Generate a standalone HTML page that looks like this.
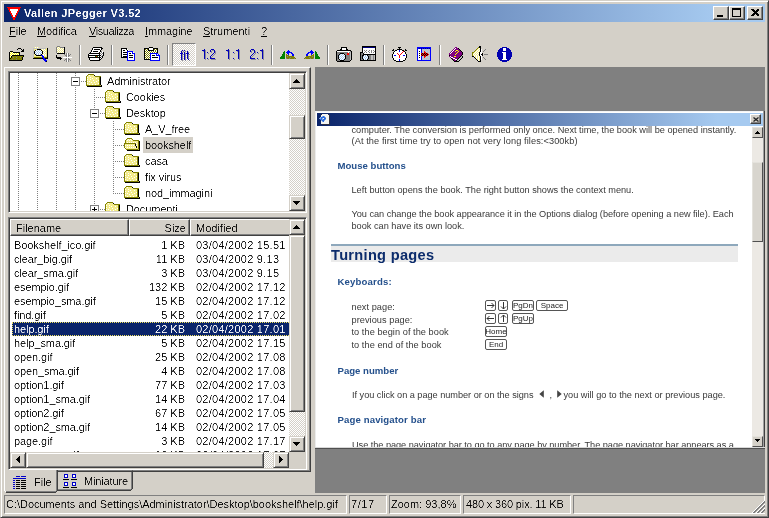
<!DOCTYPE html><html><head><meta charset="utf-8"><style>
html,body{margin:0;padding:0;}
body{will-change:transform;width:769px;height:518px;overflow:hidden;position:relative;background:#d4d0c8;font-family:"Liberation Sans",sans-serif;font-size:11px;color:#000;}
.a{position:absolute;box-sizing:border-box;}
.t{position:absolute;white-space:nowrap;line-height:13px;filter:url(#crisp);}
.d{filter:none;}
u{text-decoration-thickness:1px;text-underline-offset:1px;}
svg{position:absolute;shape-rendering:crispEdges;}
.dith{background-image:linear-gradient(45deg,#fff 25%,transparent 25%,transparent 75%,#fff 75%),linear-gradient(45deg,#fff 25%,transparent 25%,transparent 75%,#fff 75%);background-size:2px 2px;background-position:0 0,1px 1px;background-color:#d4d0c8;}
</style></head><body>
<svg width="0" height="0" style="position:absolute;left:0;top:0"><filter id="crisp" x="-5%" y="-20%" width="110%" height="140%"><feComponentTransfer><feFuncA type="table" tableValues="0 0 0.8 1"/></feComponentTransfer></filter></svg>

<div class="a" style="left:0px;top:0px;width:769px;height:518px;border-top:1px solid #d4d0c8;border-left:1px solid #d4d0c8;border-right:1px solid #404040;border-bottom:1px solid #404040;box-shadow:inset 1px 1px #ffffff,inset -1px -1px #808080;"></div>
<div class="a" style="left:4px;top:4px;width:761px;height:18px;background:linear-gradient(to right,#0a246a 0px,#a6caf0 716px);"></div>
<div class="t" style="left:24px;top:7px;color:#fff;font-weight:bold;letter-spacing:0.35px;">Vallen JPegger V3.52</div>
<div class="a" style="left:713px;top:6px;width:16px;height:14px;background:#d4d0c8;border:1px solid;border-color:#ffffff #404040 #404040 #ffffff;box-shadow:inset -1px -1px #808080;"><div class="a" style="left:3px;top:8px;width:6px;height:2px;background:#000"></div></div>
<div class="a" style="left:729px;top:6px;width:16px;height:14px;background:#d4d0c8;border:1px solid;border-color:#ffffff #404040 #404040 #ffffff;box-shadow:inset -1px -1px #808080;"><div class="a" style="left:2px;top:1px;width:9px;height:9px;border:1px solid #000;border-top-width:2px"></div></div>
<div class="a" style="left:747px;top:6px;width:16px;height:14px;background:#d4d0c8;border:1px solid;border-color:#ffffff #404040 #404040 #ffffff;box-shadow:inset -1px -1px #808080;"><svg style="left:3px;top:2px" width="8" height="7" viewBox="0 0 8 7"><path d="M0 0h2l2 2 2-2h2v1l-2.5 2.5L8 6v1H6L4 5 2 7H0V6l2.5-2.5L0 1z" fill="#000"/></svg></div>
<div class="t" style="left:9px;top:25px;letter-spacing:0px;"><u>F</u>ile</div>
<div class="t" style="left:37px;top:25px;letter-spacing:-0.14px;"><u>M</u>odifica</div>
<div class="t" style="left:89px;top:25px;letter-spacing:-0.44px;"><u>V</u>isualizza</div>
<div class="t" style="left:145px;top:25px;letter-spacing:-0.14px;"><u>I</u>mmagine</div>
<div class="t" style="left:203px;top:25px;letter-spacing:0px;"><u>S</u>trumenti</div>
<div class="t" style="left:261px;top:25px;letter-spacing:0px;"><u>?</u></div>
<div class="a" style="left:79px;top:45px;width:1px;height:20px;background:#808080;"></div>
<div class="a" style="left:80px;top:45px;width:1px;height:20px;background:#ffffff;"></div>
<div class="a" style="left:111px;top:45px;width:1px;height:20px;background:#808080;"></div>
<div class="a" style="left:112px;top:45px;width:1px;height:20px;background:#ffffff;"></div>
<div class="a" style="left:167px;top:45px;width:1px;height:20px;background:#808080;"></div>
<div class="a" style="left:168px;top:45px;width:1px;height:20px;background:#ffffff;"></div>
<div class="a" style="left:271px;top:45px;width:1px;height:20px;background:#808080;"></div>
<div class="a" style="left:272px;top:45px;width:1px;height:20px;background:#ffffff;"></div>
<div class="a" style="left:327px;top:45px;width:1px;height:20px;background:#808080;"></div>
<div class="a" style="left:328px;top:45px;width:1px;height:20px;background:#ffffff;"></div>
<div class="a" style="left:383px;top:45px;width:1px;height:20px;background:#808080;"></div>
<div class="a" style="left:384px;top:45px;width:1px;height:20px;background:#ffffff;"></div>
<div class="a" style="left:439px;top:45px;width:1px;height:20px;background:#808080;"></div>
<div class="a" style="left:440px;top:45px;width:1px;height:20px;background:#ffffff;"></div>
<div class="a dith" style="left:172px;top:43px;width:24px;height:23px;border:1px solid;border-color:#808080 #ffffff #ffffff #808080;"></div>
<svg style="left:8px;top:46px" width="16" height="15" viewBox="0 0 16 15"><rect x="10" y="2" width="3" height="1" fill="#000000"/><rect x="9" y="3" width="1" height="1" fill="#000000"/><rect x="13" y="3" width="1" height="1" fill="#000000"/><rect x="15" y="3" width="1" height="1" fill="#000000"/><rect x="14" y="4" width="2" height="1" fill="#000000"/><rect x="2" y="5" width="3" height="1" fill="#000000"/><rect x="13" y="5" width="3" height="1" fill="#000000"/><rect x="1" y="6" width="1" height="1" fill="#000000"/><rect x="2" y="6" width="1" height="1" fill="#ffffff"/><rect x="3" y="6" width="1" height="1" fill="#ffff00"/><rect x="4" y="6" width="1" height="1" fill="#ffffff"/><rect x="5" y="6" width="7" height="1" fill="#000000"/><rect x="1" y="7" width="1" height="1" fill="#000000"/><rect x="2" y="7" width="1" height="1" fill="#ffff00"/><rect x="3" y="7" width="1" height="1" fill="#ffffff"/><rect x="4" y="7" width="1" height="1" fill="#ffff00"/><rect x="5" y="7" width="1" height="1" fill="#ffffff"/><rect x="6" y="7" width="1" height="1" fill="#ffff00"/><rect x="7" y="7" width="1" height="1" fill="#ffffff"/><rect x="8" y="7" width="1" height="1" fill="#ffff00"/><rect x="9" y="7" width="1" height="1" fill="#ffffff"/><rect x="10" y="7" width="1" height="1" fill="#ffff00"/><rect x="11" y="7" width="1" height="1" fill="#000000"/><rect x="1" y="8" width="1" height="1" fill="#000000"/><rect x="2" y="8" width="1" height="1" fill="#ffffff"/><rect x="3" y="8" width="1" height="1" fill="#ffff00"/><rect x="4" y="8" width="1" height="1" fill="#ffffff"/><rect x="5" y="8" width="1" height="1" fill="#ffff00"/><rect x="6" y="8" width="1" height="1" fill="#ffffff"/><rect x="7" y="8" width="1" height="1" fill="#ffff00"/><rect x="8" y="8" width="1" height="1" fill="#ffffff"/><rect x="9" y="8" width="1" height="1" fill="#ffff00"/><rect x="10" y="8" width="1" height="1" fill="#ffffff"/><rect x="11" y="8" width="1" height="1" fill="#000000"/><rect x="1" y="9" width="1" height="1" fill="#000000"/><rect x="2" y="9" width="1" height="1" fill="#ffff00"/><rect x="3" y="9" width="1" height="1" fill="#ffffff"/><rect x="4" y="9" width="12" height="1" fill="#000000"/><rect x="1" y="10" width="1" height="1" fill="#000000"/><rect x="2" y="10" width="1" height="1" fill="#ffffff"/><rect x="3" y="10" width="1" height="1" fill="#000000"/><rect x="4" y="10" width="11" height="1" fill="#808000"/><rect x="15" y="10" width="1" height="1" fill="#000000"/><rect x="1" y="11" width="1" height="1" fill="#000000"/><rect x="2" y="11" width="1" height="1" fill="#ffff00"/><rect x="3" y="11" width="1" height="1" fill="#000000"/><rect x="4" y="11" width="1" height="1" fill="#808000"/><rect x="5" y="11" width="1" height="1" fill="#808080"/><rect x="6" y="11" width="2" height="1" fill="#808000"/><rect x="8" y="11" width="1" height="1" fill="#808080"/><rect x="9" y="11" width="3" height="1" fill="#808000"/><rect x="12" y="11" width="1" height="1" fill="#808080"/><rect x="13" y="11" width="1" height="1" fill="#808000"/><rect x="14" y="11" width="1" height="1" fill="#000000"/><rect x="1" y="12" width="2" height="1" fill="#000000"/><rect x="3" y="12" width="11" height="1" fill="#808000"/><rect x="14" y="12" width="1" height="1" fill="#000000"/><rect x="1" y="13" width="1" height="1" fill="#000000"/><rect x="2" y="13" width="2" height="1" fill="#808000"/><rect x="4" y="13" width="1" height="1" fill="#808080"/><rect x="5" y="13" width="3" height="1" fill="#808000"/><rect x="8" y="13" width="1" height="1" fill="#808080"/><rect x="9" y="13" width="5" height="1" fill="#808000"/><rect x="14" y="13" width="1" height="1" fill="#000000"/><rect x="1" y="14" width="13" height="1" fill="#000000"/></svg>
<svg style="left:32px;top:46px" width="16" height="16" viewBox="0 0 16 16"><rect x="2" y="1" width="1" height="1" fill="#f4ec8c"/><rect x="3" y="1" width="1" height="1" fill="#ffffff"/><rect x="4" y="1" width="1" height="1" fill="#f4ec8c"/><rect x="5" y="1" width="1" height="1" fill="#ffffff"/><rect x="6" y="1" width="1" height="1" fill="#f4ec8c"/><rect x="1" y="2" width="13" height="1" fill="#c0c0c0"/><rect x="14" y="2" width="1" height="1" fill="#f4ec8c"/><rect x="15" y="2" width="1" height="1" fill="#000000"/><rect x="1" y="3" width="1" height="1" fill="#c0c0c0"/><rect x="2" y="3" width="3" height="1" fill="#f4ec8c"/><rect x="5" y="3" width="4" height="1" fill="#000000"/><rect x="9" y="3" width="1" height="1" fill="#f4ec8c"/><rect x="10" y="3" width="1" height="1" fill="#ffffff"/><rect x="11" y="3" width="1" height="1" fill="#f4ec8c"/><rect x="12" y="3" width="1" height="1" fill="#ffffff"/><rect x="13" y="3" width="2" height="1" fill="#f4ec8c"/><rect x="15" y="3" width="1" height="1" fill="#000000"/><rect x="1" y="4" width="1" height="1" fill="#c0c0c0"/><rect x="2" y="4" width="1" height="1" fill="#f4ec8c"/><rect x="3" y="4" width="1" height="1" fill="#000000"/><rect x="4" y="4" width="1" height="1" fill="#ffffff"/><rect x="5" y="4" width="1" height="1" fill="#a6caf0"/><rect x="6" y="4" width="1" height="1" fill="#ffffff"/><rect x="7" y="4" width="1" height="1" fill="#a6caf0"/><rect x="8" y="4" width="1" height="1" fill="#ffffff"/><rect x="9" y="4" width="1" height="1" fill="#000000"/><rect x="10" y="4" width="1" height="1" fill="#f4ec8c"/><rect x="11" y="4" width="1" height="1" fill="#ffffff"/><rect x="12" y="4" width="1" height="1" fill="#f4ec8c"/><rect x="13" y="4" width="1" height="1" fill="#ffffff"/><rect x="14" y="4" width="1" height="1" fill="#f4ec8c"/><rect x="15" y="4" width="1" height="1" fill="#000000"/><rect x="1" y="5" width="1" height="1" fill="#c0c0c0"/><rect x="2" y="5" width="1" height="1" fill="#000000"/><rect x="3" y="5" width="1" height="1" fill="#ffffff"/><rect x="4" y="5" width="1" height="1" fill="#a6caf0"/><rect x="5" y="5" width="1" height="1" fill="#ffffff"/><rect x="6" y="5" width="1" height="1" fill="#a6caf0"/><rect x="7" y="5" width="1" height="1" fill="#ffffff"/><rect x="8" y="5" width="1" height="1" fill="#a6caf0"/><rect x="9" y="5" width="1" height="1" fill="#ffffff"/><rect x="10" y="5" width="1" height="1" fill="#000000"/><rect x="11" y="5" width="1" height="1" fill="#f4ec8c"/><rect x="12" y="5" width="1" height="1" fill="#ffffff"/><rect x="13" y="5" width="2" height="1" fill="#f4ec8c"/><rect x="15" y="5" width="1" height="1" fill="#000000"/><rect x="1" y="6" width="1" height="1" fill="#c0c0c0"/><rect x="2" y="6" width="1" height="1" fill="#000000"/><rect x="3" y="6" width="1" height="1" fill="#a6caf0"/><rect x="4" y="6" width="1" height="1" fill="#ffffff"/><rect x="5" y="6" width="1" height="1" fill="#a6caf0"/><rect x="6" y="6" width="1" height="1" fill="#ffffff"/><rect x="7" y="6" width="1" height="1" fill="#a6caf0"/><rect x="8" y="6" width="1" height="1" fill="#ffffff"/><rect x="9" y="6" width="1" height="1" fill="#a6caf0"/><rect x="10" y="6" width="1" height="1" fill="#000000"/><rect x="11" y="6" width="1" height="1" fill="#ffffff"/><rect x="12" y="6" width="1" height="1" fill="#f4ec8c"/><rect x="13" y="6" width="1" height="1" fill="#ffffff"/><rect x="14" y="6" width="1" height="1" fill="#f4ec8c"/><rect x="15" y="6" width="1" height="1" fill="#000000"/><rect x="1" y="7" width="1" height="1" fill="#c0c0c0"/><rect x="2" y="7" width="1" height="1" fill="#000000"/><rect x="3" y="7" width="1" height="1" fill="#ffffff"/><rect x="4" y="7" width="1" height="1" fill="#a6caf0"/><rect x="5" y="7" width="1" height="1" fill="#ffffff"/><rect x="6" y="7" width="1" height="1" fill="#a6caf0"/><rect x="7" y="7" width="1" height="1" fill="#ffffff"/><rect x="8" y="7" width="1" height="1" fill="#a6caf0"/><rect x="9" y="7" width="1" height="1" fill="#ffffff"/><rect x="10" y="7" width="1" height="1" fill="#000000"/><rect x="11" y="7" width="1" height="1" fill="#f4ec8c"/><rect x="12" y="7" width="1" height="1" fill="#ffffff"/><rect x="13" y="7" width="2" height="1" fill="#f4ec8c"/><rect x="15" y="7" width="1" height="1" fill="#000000"/><rect x="1" y="8" width="1" height="1" fill="#c0c0c0"/><rect x="2" y="8" width="1" height="1" fill="#f4ec8c"/><rect x="3" y="8" width="1" height="1" fill="#000000"/><rect x="4" y="8" width="1" height="1" fill="#a6caf0"/><rect x="5" y="8" width="1" height="1" fill="#ffffff"/><rect x="6" y="8" width="1" height="1" fill="#a6caf0"/><rect x="7" y="8" width="1" height="1" fill="#ffffff"/><rect x="8" y="8" width="1" height="1" fill="#a6caf0"/><rect x="9" y="8" width="1" height="1" fill="#000000"/><rect x="10" y="8" width="1" height="1" fill="#f4ec8c"/><rect x="11" y="8" width="1" height="1" fill="#ffffff"/><rect x="12" y="8" width="1" height="1" fill="#f4ec8c"/><rect x="13" y="8" width="1" height="1" fill="#ffffff"/><rect x="14" y="8" width="1" height="1" fill="#f4ec8c"/><rect x="15" y="8" width="1" height="1" fill="#000000"/><rect x="1" y="9" width="1" height="1" fill="#c0c0c0"/><rect x="2" y="9" width="2" height="1" fill="#f4ec8c"/><rect x="4" y="9" width="5" height="1" fill="#000000"/><rect x="9" y="9" width="2" height="1" fill="#0000ff"/><rect x="11" y="9" width="1" height="1" fill="#ffffff"/><rect x="12" y="9" width="1" height="1" fill="#f4ec8c"/><rect x="13" y="9" width="1" height="1" fill="#ffffff"/><rect x="14" y="9" width="1" height="1" fill="#f4ec8c"/><rect x="15" y="9" width="1" height="1" fill="#000000"/><rect x="1" y="10" width="1" height="1" fill="#c0c0c0"/><rect x="2" y="10" width="8" height="1" fill="#f4ec8c"/><rect x="10" y="10" width="2" height="1" fill="#0000ff"/><rect x="12" y="10" width="3" height="1" fill="#f4ec8c"/><rect x="15" y="10" width="1" height="1" fill="#000000"/><rect x="1" y="11" width="1" height="1" fill="#c0c0c0"/><rect x="2" y="11" width="8" height="1" fill="#808000"/><rect x="10" y="11" width="2" height="1" fill="#0000ff"/><rect x="12" y="11" width="3" height="1" fill="#808000"/><rect x="15" y="11" width="1" height="1" fill="#000000"/><rect x="1" y="12" width="10" height="1" fill="#000000"/><rect x="11" y="12" width="2" height="1" fill="#0000ff"/><rect x="13" y="12" width="3" height="1" fill="#000000"/><rect x="11" y="13" width="3" height="1" fill="#0000ff"/><rect x="12" y="14" width="3" height="1" fill="#0000ff"/><rect x="13" y="15" width="1" height="1" fill="#0000ff"/><rect x="14" y="15" width="1" height="1" fill="#000000"/></svg>
<svg style="left:56px;top:46px" width="16" height="16" viewBox="0 0 16 16"><rect x="1" y="0" width="3" height="1" fill="#808080"/><rect x="0" y="1" width="1" height="1" fill="#808080"/><rect x="1" y="1" width="1" height="1" fill="#f4ec8c"/><rect x="2" y="1" width="1" height="1" fill="#ffffff"/><rect x="3" y="1" width="1" height="1" fill="#f4ec8c"/><rect x="4" y="1" width="4" height="1" fill="#808080"/><rect x="8" y="1" width="1" height="1" fill="#000000"/><rect x="0" y="2" width="1" height="1" fill="#808080"/><rect x="1" y="2" width="1" height="1" fill="#ffffff"/><rect x="2" y="2" width="1" height="1" fill="#f4ec8c"/><rect x="3" y="2" width="1" height="1" fill="#ffffff"/><rect x="4" y="2" width="1" height="1" fill="#f4ec8c"/><rect x="5" y="2" width="1" height="1" fill="#ffffff"/><rect x="6" y="2" width="1" height="1" fill="#f4ec8c"/><rect x="7" y="2" width="1" height="1" fill="#ffffff"/><rect x="8" y="2" width="1" height="1" fill="#000000"/><rect x="0" y="3" width="1" height="1" fill="#808080"/><rect x="1" y="3" width="1" height="1" fill="#f4ec8c"/><rect x="2" y="3" width="1" height="1" fill="#ffffff"/><rect x="3" y="3" width="1" height="1" fill="#f4ec8c"/><rect x="4" y="3" width="1" height="1" fill="#ffffff"/><rect x="5" y="3" width="1" height="1" fill="#f4ec8c"/><rect x="6" y="3" width="1" height="1" fill="#ffffff"/><rect x="7" y="3" width="1" height="1" fill="#f4ec8c"/><rect x="8" y="3" width="1" height="1" fill="#000000"/><rect x="0" y="4" width="1" height="1" fill="#808080"/><rect x="1" y="4" width="1" height="1" fill="#ffffff"/><rect x="2" y="4" width="1" height="1" fill="#f4ec8c"/><rect x="3" y="4" width="1" height="1" fill="#ffffff"/><rect x="4" y="4" width="1" height="1" fill="#f4ec8c"/><rect x="5" y="4" width="1" height="1" fill="#ffffff"/><rect x="6" y="4" width="1" height="1" fill="#f4ec8c"/><rect x="7" y="4" width="1" height="1" fill="#ffffff"/><rect x="8" y="4" width="1" height="1" fill="#000000"/><rect x="0" y="5" width="1" height="1" fill="#808080"/><rect x="1" y="5" width="1" height="1" fill="#f4ec8c"/><rect x="2" y="5" width="1" height="1" fill="#ffffff"/><rect x="3" y="5" width="1" height="1" fill="#f4ec8c"/><rect x="4" y="5" width="1" height="1" fill="#ffffff"/><rect x="5" y="5" width="1" height="1" fill="#f4ec8c"/><rect x="6" y="5" width="1" height="1" fill="#ffffff"/><rect x="7" y="5" width="1" height="1" fill="#f4ec8c"/><rect x="8" y="5" width="1" height="1" fill="#000000"/><rect x="0" y="6" width="1" height="1" fill="#808080"/><rect x="1" y="6" width="1" height="1" fill="#ffffff"/><rect x="2" y="6" width="1" height="1" fill="#f4ec8c"/><rect x="3" y="6" width="1" height="1" fill="#ffffff"/><rect x="4" y="6" width="1" height="1" fill="#f4ec8c"/><rect x="5" y="6" width="1" height="1" fill="#ffffff"/><rect x="6" y="6" width="1" height="1" fill="#f4ec8c"/><rect x="7" y="6" width="1" height="1" fill="#ffffff"/><rect x="8" y="6" width="1" height="1" fill="#000000"/><rect x="1" y="7" width="8" height="1" fill="#000000"/><rect x="10" y="7" width="1" height="1" fill="#808080"/><rect x="11" y="7" width="1" height="1" fill="#ffffff"/><rect x="12" y="7" width="1" height="1" fill="#808080"/><rect x="8" y="8" width="1" height="1" fill="#808080"/><rect x="10" y="8" width="1" height="1" fill="#808080"/><rect x="11" y="8" width="1" height="1" fill="#ffffff"/><rect x="12" y="8" width="1" height="1" fill="#808080"/><rect x="14" y="8" width="1" height="1" fill="#808080"/><rect x="0" y="9" width="1" height="1" fill="#000000"/><rect x="9" y="9" width="2" height="1" fill="#808080"/><rect x="11" y="9" width="1" height="1" fill="#ffffff"/><rect x="12" y="9" width="2" height="1" fill="#808080"/><rect x="0" y="10" width="1" height="1" fill="#000000"/><rect x="10" y="10" width="1" height="1" fill="#808080"/><rect x="11" y="10" width="1" height="1" fill="#ffffff"/><rect x="12" y="10" width="1" height="1" fill="#808080"/><rect x="0" y="11" width="5" height="1" fill="#000000"/><rect x="7" y="11" width="9" height="1" fill="#ffffff"/><rect x="1" y="12" width="5" height="1" fill="#000000"/><rect x="10" y="12" width="1" height="1" fill="#808080"/><rect x="11" y="12" width="1" height="1" fill="#ffffff"/><rect x="12" y="12" width="1" height="1" fill="#808080"/><rect x="4" y="13" width="1" height="1" fill="#000000"/><rect x="9" y="13" width="2" height="1" fill="#808080"/><rect x="11" y="13" width="1" height="1" fill="#ffffff"/><rect x="12" y="13" width="2" height="1" fill="#808080"/><rect x="8" y="14" width="1" height="1" fill="#808080"/><rect x="10" y="14" width="1" height="1" fill="#808080"/><rect x="11" y="14" width="1" height="1" fill="#ffffff"/><rect x="12" y="14" width="1" height="1" fill="#808080"/><rect x="14" y="14" width="1" height="1" fill="#808080"/><rect x="10" y="15" width="1" height="1" fill="#808080"/><rect x="11" y="15" width="1" height="1" fill="#ffffff"/><rect x="12" y="15" width="1" height="1" fill="#808080"/></svg>
<svg style="left:88px;top:46px" width="16" height="15" viewBox="0 0 16 15"><rect x="5" y="1" width="9" height="1" fill="#000000"/><rect x="4" y="2" width="1" height="1" fill="#000000"/><rect x="5" y="2" width="8" height="1" fill="#ffffff"/><rect x="13" y="2" width="2" height="1" fill="#000000"/><rect x="4" y="3" width="1" height="1" fill="#000000"/><rect x="5" y="3" width="1" height="1" fill="#ffffff"/><rect x="6" y="3" width="6" height="1" fill="#000000"/><rect x="12" y="3" width="1" height="1" fill="#ffffff"/><rect x="13" y="3" width="1" height="1" fill="#000000"/><rect x="3" y="4" width="1" height="1" fill="#000000"/><rect x="4" y="4" width="8" height="1" fill="#ffffff"/><rect x="12" y="4" width="1" height="1" fill="#000000"/><rect x="3" y="5" width="1" height="1" fill="#000000"/><rect x="4" y="5" width="1" height="1" fill="#ffffff"/><rect x="5" y="5" width="5" height="1" fill="#000000"/><rect x="10" y="5" width="2" height="1" fill="#ffffff"/><rect x="12" y="5" width="1" height="1" fill="#000000"/><rect x="13" y="5" width="1" height="1" fill="#808080"/><rect x="14" y="5" width="1" height="1" fill="#ffffff"/><rect x="2" y="6" width="1" height="1" fill="#000000"/><rect x="3" y="6" width="8" height="1" fill="#ffffff"/><rect x="11" y="6" width="1" height="1" fill="#000000"/><rect x="12" y="6" width="1" height="1" fill="#ffffff"/><rect x="13" y="6" width="1" height="1" fill="#808080"/><rect x="14" y="6" width="1" height="1" fill="#ffffff"/><rect x="15" y="6" width="1" height="1" fill="#000000"/><rect x="1" y="7" width="11" height="1" fill="#000000"/><rect x="12" y="7" width="1" height="1" fill="#808080"/><rect x="13" y="7" width="1" height="1" fill="#ffffff"/><rect x="14" y="7" width="1" height="1" fill="#808080"/><rect x="15" y="7" width="1" height="1" fill="#000000"/><rect x="0" y="8" width="1" height="1" fill="#000000"/><rect x="1" y="8" width="10" height="1" fill="#ffffff"/><rect x="11" y="8" width="1" height="1" fill="#000000"/><rect x="12" y="8" width="1" height="1" fill="#ffffff"/><rect x="13" y="8" width="1" height="1" fill="#808080"/><rect x="14" y="8" width="1" height="1" fill="#ffffff"/><rect x="15" y="8" width="1" height="1" fill="#000000"/><rect x="0" y="9" width="13" height="1" fill="#000000"/><rect x="13" y="9" width="1" height="1" fill="#ffffff"/><rect x="14" y="9" width="1" height="1" fill="#808080"/><rect x="15" y="9" width="1" height="1" fill="#000000"/><rect x="0" y="10" width="1" height="1" fill="#000000"/><rect x="1" y="10" width="6" height="1" fill="#ffffff"/><rect x="7" y="10" width="1" height="1" fill="#008000"/><rect x="8" y="10" width="1" height="1" fill="#ff0000"/><rect x="9" y="10" width="1" height="1" fill="#008000"/><rect x="10" y="10" width="1" height="1" fill="#ffffff"/><rect x="11" y="10" width="1" height="1" fill="#000000"/><rect x="12" y="10" width="1" height="1" fill="#ffffff"/><rect x="13" y="10" width="1" height="1" fill="#808080"/><rect x="14" y="10" width="1" height="1" fill="#000000"/><rect x="0" y="11" width="13" height="1" fill="#000000"/><rect x="13" y="11" width="1" height="1" fill="#ffffff"/><rect x="14" y="11" width="1" height="1" fill="#000000"/><rect x="1" y="12" width="1" height="1" fill="#000000"/><rect x="2" y="12" width="9" height="1" fill="#ffffff"/><rect x="11" y="12" width="1" height="1" fill="#000000"/><rect x="12" y="12" width="1" height="1" fill="#ffffff"/><rect x="13" y="12" width="1" height="1" fill="#000000"/><rect x="1" y="13" width="1" height="1" fill="#000000"/><rect x="2" y="13" width="9" height="1" fill="#ffffff"/><rect x="11" y="13" width="2" height="1" fill="#000000"/><rect x="2" y="14" width="10" height="1" fill="#000000"/></svg>
<svg style="left:120px;top:47px" width="16" height="14" viewBox="0 0 16 14"><rect x="1" y="1" width="6" height="1" fill="#000000"/><rect x="1" y="2" width="1" height="1" fill="#000000"/><rect x="2" y="2" width="4" height="1" fill="#ffffff"/><rect x="6" y="2" width="1" height="1" fill="#000000"/><rect x="7" y="2" width="1" height="1" fill="#ffffff"/><rect x="1" y="3" width="1" height="1" fill="#000000"/><rect x="2" y="3" width="1" height="1" fill="#ffffff"/><rect x="3" y="3" width="2" height="1" fill="#000000"/><rect x="5" y="3" width="2" height="1" fill="#ffffff"/><rect x="7" y="3" width="1" height="1" fill="#000000"/><rect x="8" y="3" width="1" height="1" fill="#ffffff"/><rect x="1" y="4" width="1" height="1" fill="#000000"/><rect x="2" y="4" width="5" height="1" fill="#ffffff"/><rect x="7" y="4" width="6" height="1" fill="#0000ff"/><rect x="1" y="5" width="1" height="1" fill="#000000"/><rect x="2" y="5" width="1" height="1" fill="#ffffff"/><rect x="3" y="5" width="4" height="1" fill="#000000"/><rect x="7" y="5" width="1" height="1" fill="#0000ff"/><rect x="8" y="5" width="4" height="1" fill="#ffffff"/><rect x="12" y="5" width="1" height="1" fill="#0000ff"/><rect x="13" y="5" width="1" height="1" fill="#ffffff"/><rect x="1" y="6" width="1" height="1" fill="#000000"/><rect x="2" y="6" width="5" height="1" fill="#ffffff"/><rect x="7" y="6" width="1" height="1" fill="#0000ff"/><rect x="8" y="6" width="1" height="1" fill="#ffffff"/><rect x="9" y="6" width="2" height="1" fill="#000000"/><rect x="11" y="6" width="1" height="1" fill="#ffffff"/><rect x="12" y="6" width="3" height="1" fill="#0000ff"/><rect x="1" y="7" width="1" height="1" fill="#000000"/><rect x="2" y="7" width="1" height="1" fill="#ffffff"/><rect x="3" y="7" width="4" height="1" fill="#000000"/><rect x="7" y="7" width="1" height="1" fill="#0000ff"/><rect x="8" y="7" width="6" height="1" fill="#ffffff"/><rect x="14" y="7" width="1" height="1" fill="#0000ff"/><rect x="1" y="8" width="1" height="1" fill="#000000"/><rect x="2" y="8" width="5" height="1" fill="#ffffff"/><rect x="7" y="8" width="1" height="1" fill="#0000ff"/><rect x="8" y="8" width="1" height="1" fill="#ffffff"/><rect x="9" y="8" width="4" height="1" fill="#000000"/><rect x="13" y="8" width="1" height="1" fill="#ffffff"/><rect x="14" y="8" width="1" height="1" fill="#0000ff"/><rect x="1" y="9" width="1" height="1" fill="#000000"/><rect x="2" y="9" width="1" height="1" fill="#ffffff"/><rect x="3" y="9" width="4" height="1" fill="#000000"/><rect x="7" y="9" width="1" height="1" fill="#0000ff"/><rect x="8" y="9" width="6" height="1" fill="#ffffff"/><rect x="14" y="9" width="1" height="1" fill="#0000ff"/><rect x="1" y="10" width="6" height="1" fill="#000000"/><rect x="7" y="10" width="1" height="1" fill="#0000ff"/><rect x="8" y="10" width="1" height="1" fill="#ffffff"/><rect x="9" y="10" width="4" height="1" fill="#000000"/><rect x="13" y="10" width="1" height="1" fill="#ffffff"/><rect x="14" y="10" width="1" height="1" fill="#0000ff"/><rect x="7" y="11" width="1" height="1" fill="#0000ff"/><rect x="8" y="11" width="6" height="1" fill="#ffffff"/><rect x="14" y="11" width="1" height="1" fill="#0000ff"/><rect x="7" y="12" width="1" height="1" fill="#0000ff"/><rect x="8" y="12" width="6" height="1" fill="#ffffff"/><rect x="14" y="12" width="1" height="1" fill="#0000ff"/><rect x="7" y="13" width="8" height="1" fill="#0000ff"/></svg>
<svg style="left:144px;top:47px" width="16" height="14" viewBox="0 0 16 14"><rect x="5" y="0" width="4" height="1" fill="#000000"/><rect x="0" y="1" width="5" height="1" fill="#000000"/><rect x="5" y="1" width="4" height="1" fill="#ffffff"/><rect x="9" y="1" width="5" height="1" fill="#000000"/><rect x="0" y="2" width="1" height="1" fill="#000000"/><rect x="1" y="2" width="1" height="1" fill="#808000"/><rect x="2" y="2" width="1" height="1" fill="#ffffff"/><rect x="3" y="2" width="1" height="1" fill="#808000"/><rect x="4" y="2" width="1" height="1" fill="#000000"/><rect x="5" y="2" width="4" height="1" fill="#ffffff"/><rect x="9" y="2" width="1" height="1" fill="#000000"/><rect x="10" y="2" width="1" height="1" fill="#808000"/><rect x="11" y="2" width="1" height="1" fill="#ffffff"/><rect x="12" y="2" width="1" height="1" fill="#808000"/><rect x="13" y="2" width="1" height="1" fill="#000000"/><rect x="0" y="3" width="1" height="1" fill="#000000"/><rect x="1" y="3" width="1" height="1" fill="#ffffff"/><rect x="2" y="3" width="1" height="1" fill="#808000"/><rect x="3" y="3" width="1" height="1" fill="#ffffff"/><rect x="4" y="3" width="6" height="1" fill="#000000"/><rect x="10" y="3" width="1" height="1" fill="#ffffff"/><rect x="11" y="3" width="1" height="1" fill="#808000"/><rect x="12" y="3" width="1" height="1" fill="#ffffff"/><rect x="13" y="3" width="1" height="1" fill="#000000"/><rect x="0" y="4" width="1" height="1" fill="#000000"/><rect x="1" y="4" width="1" height="1" fill="#808000"/><rect x="2" y="4" width="1" height="1" fill="#ffffff"/><rect x="3" y="4" width="1" height="1" fill="#808000"/><rect x="4" y="4" width="1" height="1" fill="#ffffff"/><rect x="5" y="4" width="1" height="1" fill="#808000"/><rect x="6" y="4" width="1" height="1" fill="#ffffff"/><rect x="7" y="4" width="1" height="1" fill="#808000"/><rect x="8" y="4" width="1" height="1" fill="#ffffff"/><rect x="9" y="4" width="1" height="1" fill="#808000"/><rect x="10" y="4" width="1" height="1" fill="#ffffff"/><rect x="11" y="4" width="1" height="1" fill="#808000"/><rect x="12" y="4" width="1" height="1" fill="#ffffff"/><rect x="13" y="4" width="1" height="1" fill="#000000"/><rect x="0" y="5" width="1" height="1" fill="#000000"/><rect x="1" y="5" width="1" height="1" fill="#ffffff"/><rect x="2" y="5" width="1" height="1" fill="#808000"/><rect x="3" y="5" width="1" height="1" fill="#ffffff"/><rect x="4" y="5" width="1" height="1" fill="#808000"/><rect x="5" y="5" width="1" height="1" fill="#ffffff"/><rect x="6" y="5" width="1" height="1" fill="#808000"/><rect x="7" y="5" width="1" height="1" fill="#ffffff"/><rect x="8" y="5" width="1" height="1" fill="#808000"/><rect x="9" y="5" width="1" height="1" fill="#ffffff"/><rect x="10" y="5" width="1" height="1" fill="#808000"/><rect x="11" y="5" width="1" height="1" fill="#ffffff"/><rect x="12" y="5" width="1" height="1" fill="#808000"/><rect x="13" y="5" width="1" height="1" fill="#000000"/><rect x="0" y="6" width="1" height="1" fill="#000000"/><rect x="1" y="6" width="1" height="1" fill="#808000"/><rect x="2" y="6" width="1" height="1" fill="#ffffff"/><rect x="3" y="6" width="1" height="1" fill="#808000"/><rect x="4" y="6" width="1" height="1" fill="#ffffff"/><rect x="5" y="6" width="1" height="1" fill="#808000"/><rect x="6" y="6" width="8" height="1" fill="#0000ff"/><rect x="0" y="7" width="1" height="1" fill="#000000"/><rect x="1" y="7" width="1" height="1" fill="#ffffff"/><rect x="2" y="7" width="1" height="1" fill="#808000"/><rect x="3" y="7" width="1" height="1" fill="#ffffff"/><rect x="4" y="7" width="1" height="1" fill="#808000"/><rect x="5" y="7" width="1" height="1" fill="#ffffff"/><rect x="6" y="7" width="1" height="1" fill="#0000ff"/><rect x="7" y="7" width="5" height="1" fill="#ffffff"/><rect x="12" y="7" width="1" height="1" fill="#0000ff"/><rect x="13" y="7" width="1" height="1" fill="#ffffff"/><rect x="14" y="7" width="1" height="1" fill="#0000ff"/><rect x="0" y="8" width="1" height="1" fill="#000000"/><rect x="1" y="8" width="1" height="1" fill="#808000"/><rect x="2" y="8" width="1" height="1" fill="#ffffff"/><rect x="3" y="8" width="1" height="1" fill="#808000"/><rect x="4" y="8" width="1" height="1" fill="#ffffff"/><rect x="5" y="8" width="1" height="1" fill="#808000"/><rect x="6" y="8" width="1" height="1" fill="#0000ff"/><rect x="7" y="8" width="1" height="1" fill="#ffffff"/><rect x="8" y="8" width="3" height="1" fill="#000000"/><rect x="11" y="8" width="1" height="1" fill="#ffffff"/><rect x="12" y="8" width="4" height="1" fill="#0000ff"/><rect x="0" y="9" width="1" height="1" fill="#000000"/><rect x="1" y="9" width="1" height="1" fill="#ffffff"/><rect x="2" y="9" width="1" height="1" fill="#808000"/><rect x="3" y="9" width="1" height="1" fill="#ffffff"/><rect x="4" y="9" width="1" height="1" fill="#808000"/><rect x="5" y="9" width="1" height="1" fill="#ffffff"/><rect x="6" y="9" width="1" height="1" fill="#0000ff"/><rect x="7" y="9" width="8" height="1" fill="#ffffff"/><rect x="15" y="9" width="1" height="1" fill="#0000ff"/><rect x="0" y="10" width="1" height="1" fill="#000000"/><rect x="1" y="10" width="1" height="1" fill="#808000"/><rect x="2" y="10" width="1" height="1" fill="#ffffff"/><rect x="3" y="10" width="1" height="1" fill="#808000"/><rect x="4" y="10" width="1" height="1" fill="#ffffff"/><rect x="5" y="10" width="1" height="1" fill="#808000"/><rect x="6" y="10" width="1" height="1" fill="#0000ff"/><rect x="7" y="10" width="1" height="1" fill="#ffffff"/><rect x="8" y="10" width="6" height="1" fill="#000000"/><rect x="14" y="10" width="1" height="1" fill="#ffffff"/><rect x="15" y="10" width="1" height="1" fill="#0000ff"/><rect x="0" y="11" width="1" height="1" fill="#000000"/><rect x="1" y="11" width="1" height="1" fill="#ffffff"/><rect x="2" y="11" width="1" height="1" fill="#808000"/><rect x="3" y="11" width="1" height="1" fill="#ffffff"/><rect x="4" y="11" width="1" height="1" fill="#808000"/><rect x="5" y="11" width="1" height="1" fill="#ffffff"/><rect x="6" y="11" width="1" height="1" fill="#0000ff"/><rect x="7" y="11" width="8" height="1" fill="#ffffff"/><rect x="15" y="11" width="1" height="1" fill="#0000ff"/><rect x="0" y="12" width="6" height="1" fill="#000000"/><rect x="6" y="12" width="1" height="1" fill="#0000ff"/><rect x="7" y="12" width="8" height="1" fill="#ffffff"/><rect x="15" y="12" width="1" height="1" fill="#0000ff"/><rect x="6" y="13" width="10" height="1" fill="#0000ff"/></svg>
<svg style="left:279px;top:46px" width="18" height="13" viewBox="0 0 18 13"><rect x="9" y="4" width="1" height="1" fill="#0000ff"/><rect x="5" y="5" width="1" height="1" fill="#008000"/><rect x="8" y="5" width="3" height="1" fill="#0000ff"/><rect x="4" y="6" width="2" height="1" fill="#008000"/><rect x="7" y="6" width="6" height="1" fill="#0000ff"/><rect x="4" y="7" width="2" height="1" fill="#008000"/><rect x="8" y="7" width="2" height="1" fill="#0000ff"/><rect x="12" y="7" width="2" height="1" fill="#0000ff"/><rect x="3" y="8" width="3" height="1" fill="#008000"/><rect x="7" y="8" width="1" height="1" fill="#808000"/><rect x="9" y="8" width="1" height="1" fill="#0000ff"/><rect x="13" y="8" width="2" height="1" fill="#0000ff"/><rect x="3" y="9" width="3" height="1" fill="#008000"/><rect x="7" y="9" width="3" height="1" fill="#808000"/><rect x="13" y="9" width="2" height="1" fill="#0000ff"/><rect x="2" y="10" width="4" height="1" fill="#008000"/><rect x="7" y="10" width="1" height="1" fill="#808000"/><rect x="8" y="10" width="1" height="1" fill="#808080"/><rect x="9" y="10" width="6" height="1" fill="#808000"/><rect x="1" y="11" width="5" height="1" fill="#008000"/><rect x="7" y="11" width="4" height="1" fill="#808000"/><rect x="11" y="11" width="1" height="1" fill="#808080"/><rect x="12" y="11" width="4" height="1" fill="#808000"/><rect x="1" y="12" width="5" height="1" fill="#008000"/><rect x="7" y="12" width="1" height="1" fill="#808080"/><rect x="8" y="12" width="2" height="1" fill="#808000"/><rect x="10" y="12" width="1" height="1" fill="#808080"/><rect x="11" y="12" width="4" height="1" fill="#808000"/><rect x="15" y="12" width="1" height="1" fill="#808080"/><rect x="16" y="12" width="1" height="1" fill="#808000"/></svg>
<svg style="left:303px;top:46px" width="18" height="13" viewBox="0 0 18 13"><rect x="8" y="4" width="1" height="1" fill="#0000ff"/><rect x="7" y="5" width="3" height="1" fill="#0000ff"/><rect x="12" y="5" width="1" height="1" fill="#008000"/><rect x="5" y="6" width="6" height="1" fill="#0000ff"/><rect x="12" y="6" width="2" height="1" fill="#008000"/><rect x="4" y="7" width="2" height="1" fill="#0000ff"/><rect x="8" y="7" width="2" height="1" fill="#0000ff"/><rect x="12" y="7" width="2" height="1" fill="#008000"/><rect x="3" y="8" width="2" height="1" fill="#0000ff"/><rect x="8" y="8" width="1" height="1" fill="#0000ff"/><rect x="10" y="8" width="1" height="1" fill="#808000"/><rect x="12" y="8" width="3" height="1" fill="#008000"/><rect x="3" y="9" width="2" height="1" fill="#0000ff"/><rect x="8" y="9" width="3" height="1" fill="#808000"/><rect x="12" y="9" width="3" height="1" fill="#008000"/><rect x="3" y="10" width="6" height="1" fill="#808000"/><rect x="9" y="10" width="1" height="1" fill="#808080"/><rect x="10" y="10" width="1" height="1" fill="#808000"/><rect x="12" y="10" width="4" height="1" fill="#008000"/><rect x="2" y="11" width="4" height="1" fill="#808000"/><rect x="6" y="11" width="1" height="1" fill="#808080"/><rect x="7" y="11" width="4" height="1" fill="#808000"/><rect x="12" y="11" width="5" height="1" fill="#008000"/><rect x="1" y="12" width="1" height="1" fill="#808000"/><rect x="2" y="12" width="1" height="1" fill="#808080"/><rect x="3" y="12" width="4" height="1" fill="#808000"/><rect x="7" y="12" width="1" height="1" fill="#808080"/><rect x="8" y="12" width="2" height="1" fill="#808000"/><rect x="10" y="12" width="1" height="1" fill="#808080"/><rect x="12" y="12" width="5" height="1" fill="#008000"/></svg>
<svg style="left:335px;top:45px" width="18" height="17" viewBox="0 0 18 17"><rect x="6" y="2" width="6" height="1" fill="#000000"/><rect x="6" y="3" width="1" height="1" fill="#000000"/><rect x="7" y="3" width="4" height="1" fill="#ffffff"/><rect x="11" y="3" width="1" height="1" fill="#000000"/><rect x="5" y="4" width="2" height="1" fill="#000000"/><rect x="7" y="4" width="4" height="1" fill="#ffffff"/><rect x="11" y="4" width="2" height="1" fill="#000000"/><rect x="2" y="5" width="14" height="1" fill="#000000"/><rect x="1" y="6" width="1" height="1" fill="#000000"/><rect x="2" y="6" width="13" height="1" fill="#ffffff"/><rect x="15" y="6" width="1" height="1" fill="#808080"/><rect x="16" y="6" width="1" height="1" fill="#000000"/><rect x="1" y="7" width="1" height="1" fill="#000000"/><rect x="2" y="7" width="11" height="1" fill="#808080"/><rect x="13" y="7" width="1" height="1" fill="#ffffff"/><rect x="14" y="7" width="1" height="1" fill="#808080"/><rect x="15" y="7" width="1" height="1" fill="#c0c0c0"/><rect x="16" y="7" width="1" height="1" fill="#000000"/><rect x="1" y="8" width="1" height="1" fill="#000000"/><rect x="2" y="8" width="3" height="1" fill="#808080"/><rect x="5" y="8" width="4" height="1" fill="#000000"/><rect x="9" y="8" width="3" height="1" fill="#808080"/><rect x="12" y="8" width="2" height="1" fill="#ff0000"/><rect x="14" y="8" width="1" height="1" fill="#808080"/><rect x="15" y="8" width="1" height="1" fill="#c0c0c0"/><rect x="16" y="8" width="1" height="1" fill="#000000"/><rect x="1" y="9" width="1" height="1" fill="#000000"/><rect x="2" y="9" width="2" height="1" fill="#808080"/><rect x="4" y="9" width="1" height="1" fill="#000000"/><rect x="5" y="9" width="1" height="1" fill="#a6caf0"/><rect x="6" y="9" width="1" height="1" fill="#ffffff"/><rect x="7" y="9" width="1" height="1" fill="#a6caf0"/><rect x="8" y="9" width="1" height="1" fill="#ffffff"/><rect x="9" y="9" width="1" height="1" fill="#000000"/><rect x="10" y="9" width="2" height="1" fill="#808080"/><rect x="12" y="9" width="2" height="1" fill="#ff0000"/><rect x="14" y="9" width="1" height="1" fill="#808080"/><rect x="15" y="9" width="1" height="1" fill="#c0c0c0"/><rect x="16" y="9" width="1" height="1" fill="#000000"/><rect x="1" y="10" width="1" height="1" fill="#000000"/><rect x="2" y="10" width="1" height="1" fill="#808080"/><rect x="3" y="10" width="1" height="1" fill="#000000"/><rect x="4" y="10" width="1" height="1" fill="#a6caf0"/><rect x="5" y="10" width="1" height="1" fill="#ffffff"/><rect x="6" y="10" width="1" height="1" fill="#a6caf0"/><rect x="7" y="10" width="1" height="1" fill="#ffffff"/><rect x="8" y="10" width="1" height="1" fill="#a6caf0"/><rect x="9" y="10" width="1" height="1" fill="#ffffff"/><rect x="10" y="10" width="1" height="1" fill="#000000"/><rect x="11" y="10" width="4" height="1" fill="#808080"/><rect x="15" y="10" width="1" height="1" fill="#c0c0c0"/><rect x="16" y="10" width="1" height="1" fill="#000000"/><rect x="1" y="11" width="1" height="1" fill="#000000"/><rect x="2" y="11" width="1" height="1" fill="#808080"/><rect x="3" y="11" width="1" height="1" fill="#000000"/><rect x="4" y="11" width="1" height="1" fill="#ffffff"/><rect x="5" y="11" width="1" height="1" fill="#a6caf0"/><rect x="6" y="11" width="1" height="1" fill="#ffffff"/><rect x="7" y="11" width="1" height="1" fill="#a6caf0"/><rect x="8" y="11" width="1" height="1" fill="#ffffff"/><rect x="9" y="11" width="1" height="1" fill="#a6caf0"/><rect x="10" y="11" width="1" height="1" fill="#000000"/><rect x="11" y="11" width="4" height="1" fill="#808080"/><rect x="15" y="11" width="1" height="1" fill="#c0c0c0"/><rect x="16" y="11" width="1" height="1" fill="#000000"/><rect x="1" y="12" width="1" height="1" fill="#000000"/><rect x="2" y="12" width="1" height="1" fill="#808080"/><rect x="3" y="12" width="1" height="1" fill="#000000"/><rect x="4" y="12" width="1" height="1" fill="#a6caf0"/><rect x="5" y="12" width="1" height="1" fill="#ffffff"/><rect x="6" y="12" width="1" height="1" fill="#a6caf0"/><rect x="7" y="12" width="1" height="1" fill="#ffffff"/><rect x="8" y="12" width="1" height="1" fill="#a6caf0"/><rect x="9" y="12" width="1" height="1" fill="#ffffff"/><rect x="10" y="12" width="1" height="1" fill="#000000"/><rect x="11" y="12" width="4" height="1" fill="#808080"/><rect x="15" y="12" width="1" height="1" fill="#c0c0c0"/><rect x="16" y="12" width="1" height="1" fill="#000000"/><rect x="1" y="13" width="1" height="1" fill="#000000"/><rect x="2" y="13" width="1" height="1" fill="#808080"/><rect x="3" y="13" width="1" height="1" fill="#000000"/><rect x="4" y="13" width="1" height="1" fill="#ffffff"/><rect x="5" y="13" width="1" height="1" fill="#a6caf0"/><rect x="6" y="13" width="1" height="1" fill="#ffffff"/><rect x="7" y="13" width="1" height="1" fill="#a6caf0"/><rect x="8" y="13" width="1" height="1" fill="#ffffff"/><rect x="9" y="13" width="1" height="1" fill="#a6caf0"/><rect x="10" y="13" width="1" height="1" fill="#000000"/><rect x="11" y="13" width="4" height="1" fill="#808080"/><rect x="15" y="13" width="1" height="1" fill="#c0c0c0"/><rect x="16" y="13" width="1" height="1" fill="#000000"/><rect x="1" y="14" width="1" height="1" fill="#000000"/><rect x="2" y="14" width="2" height="1" fill="#808080"/><rect x="4" y="14" width="1" height="1" fill="#000000"/><rect x="5" y="14" width="1" height="1" fill="#ffffff"/><rect x="6" y="14" width="1" height="1" fill="#a6caf0"/><rect x="7" y="14" width="1" height="1" fill="#ffffff"/><rect x="8" y="14" width="1" height="1" fill="#a6caf0"/><rect x="9" y="14" width="1" height="1" fill="#000000"/><rect x="10" y="14" width="5" height="1" fill="#808080"/><rect x="15" y="14" width="1" height="1" fill="#c0c0c0"/><rect x="16" y="14" width="1" height="1" fill="#000000"/><rect x="1" y="15" width="1" height="1" fill="#000000"/><rect x="2" y="15" width="3" height="1" fill="#808080"/><rect x="5" y="15" width="4" height="1" fill="#000000"/><rect x="9" y="15" width="6" height="1" fill="#808080"/><rect x="15" y="15" width="1" height="1" fill="#000000"/><rect x="2" y="16" width="13" height="1" fill="#000000"/></svg>
<svg style="left:359px;top:44px" width="18" height="17" viewBox="0 0 18 17"><rect x="3" y="2" width="14" height="1" fill="#000000"/><rect x="3" y="3" width="1" height="1" fill="#000000"/><rect x="4" y="3" width="12" height="1" fill="#000080"/><rect x="16" y="3" width="1" height="1" fill="#000000"/><rect x="3" y="4" width="1" height="1" fill="#000000"/><rect x="4" y="4" width="12" height="1" fill="#ffffff"/><rect x="16" y="4" width="1" height="1" fill="#000000"/><rect x="3" y="5" width="1" height="1" fill="#000000"/><rect x="4" y="5" width="12" height="1" fill="#ffffff"/><rect x="16" y="5" width="1" height="1" fill="#000000"/><rect x="3" y="6" width="1" height="1" fill="#000000"/><rect x="4" y="6" width="1" height="1" fill="#ffffff"/><rect x="5" y="6" width="1" height="1" fill="#808080"/><rect x="6" y="6" width="1" height="1" fill="#ffffff"/><rect x="7" y="6" width="1" height="1" fill="#808080"/><rect x="8" y="6" width="2" height="1" fill="#ffffff"/><rect x="10" y="6" width="1" height="1" fill="#808080"/><rect x="11" y="6" width="1" height="1" fill="#ffffff"/><rect x="12" y="6" width="1" height="1" fill="#808080"/><rect x="13" y="6" width="1" height="1" fill="#ffffff"/><rect x="14" y="6" width="1" height="1" fill="#808080"/><rect x="15" y="6" width="1" height="1" fill="#ffffff"/><rect x="16" y="6" width="1" height="1" fill="#000000"/><rect x="3" y="7" width="1" height="1" fill="#000000"/><rect x="4" y="7" width="2" height="1" fill="#ffffff"/><rect x="6" y="7" width="1" height="1" fill="#808080"/><rect x="7" y="7" width="2" height="1" fill="#ffffff"/><rect x="9" y="7" width="1" height="1" fill="#808080"/><rect x="10" y="7" width="2" height="1" fill="#ffffff"/><rect x="12" y="7" width="1" height="1" fill="#808080"/><rect x="13" y="7" width="2" height="1" fill="#ffffff"/><rect x="15" y="7" width="1" height="1" fill="#808080"/><rect x="16" y="7" width="1" height="1" fill="#000000"/><rect x="1" y="8" width="3" height="1" fill="#000000"/><rect x="4" y="8" width="1" height="1" fill="#ffffff"/><rect x="5" y="8" width="1" height="1" fill="#808080"/><rect x="6" y="8" width="1" height="1" fill="#ffffff"/><rect x="7" y="8" width="1" height="1" fill="#808080"/><rect x="8" y="8" width="2" height="1" fill="#ffffff"/><rect x="10" y="8" width="1" height="1" fill="#808080"/><rect x="11" y="8" width="1" height="1" fill="#ffffff"/><rect x="12" y="8" width="1" height="1" fill="#808080"/><rect x="13" y="8" width="1" height="1" fill="#ffffff"/><rect x="14" y="8" width="1" height="1" fill="#808080"/><rect x="15" y="8" width="1" height="1" fill="#ffffff"/><rect x="16" y="8" width="1" height="1" fill="#000000"/><rect x="1" y="9" width="1" height="1" fill="#000000"/><rect x="2" y="9" width="2" height="1" fill="#808080"/><rect x="4" y="9" width="1" height="1" fill="#000000"/><rect x="5" y="9" width="11" height="1" fill="#ffffff"/><rect x="16" y="9" width="1" height="1" fill="#000000"/><rect x="1" y="10" width="1" height="1" fill="#000000"/><rect x="2" y="10" width="2" height="1" fill="#808080"/><rect x="4" y="10" width="13" height="1" fill="#000000"/><rect x="1" y="11" width="1" height="1" fill="#000000"/><rect x="2" y="11" width="1" height="1" fill="#808080"/><rect x="3" y="11" width="2" height="1" fill="#000000"/><rect x="5" y="11" width="1" height="1" fill="#ffffff"/><rect x="6" y="11" width="1" height="1" fill="#a6caf0"/><rect x="7" y="11" width="1" height="1" fill="#ffffff"/><rect x="8" y="11" width="1" height="1" fill="#000000"/><rect x="9" y="11" width="3" height="1" fill="#808080"/><rect x="12" y="11" width="2" height="1" fill="#c0c0c0"/><rect x="14" y="11" width="1" height="1" fill="#808080"/><rect x="15" y="11" width="1" height="1" fill="#c0c0c0"/><rect x="16" y="11" width="1" height="1" fill="#000000"/><rect x="1" y="12" width="1" height="1" fill="#000000"/><rect x="2" y="12" width="1" height="1" fill="#808080"/><rect x="3" y="12" width="1" height="1" fill="#000000"/><rect x="4" y="12" width="1" height="1" fill="#a6caf0"/><rect x="5" y="12" width="1" height="1" fill="#ffffff"/><rect x="6" y="12" width="1" height="1" fill="#a6caf0"/><rect x="7" y="12" width="1" height="1" fill="#ffffff"/><rect x="8" y="12" width="1" height="1" fill="#a6caf0"/><rect x="9" y="12" width="1" height="1" fill="#000000"/><rect x="10" y="12" width="2" height="1" fill="#808080"/><rect x="12" y="12" width="2" height="1" fill="#c0c0c0"/><rect x="14" y="12" width="1" height="1" fill="#808080"/><rect x="15" y="12" width="1" height="1" fill="#c0c0c0"/><rect x="16" y="12" width="1" height="1" fill="#000000"/><rect x="1" y="13" width="1" height="1" fill="#000000"/><rect x="2" y="13" width="1" height="1" fill="#808080"/><rect x="3" y="13" width="1" height="1" fill="#000000"/><rect x="4" y="13" width="1" height="1" fill="#ffffff"/><rect x="5" y="13" width="1" height="1" fill="#a6caf0"/><rect x="6" y="13" width="1" height="1" fill="#ffffff"/><rect x="7" y="13" width="1" height="1" fill="#a6caf0"/><rect x="8" y="13" width="1" height="1" fill="#ffffff"/><rect x="9" y="13" width="1" height="1" fill="#000000"/><rect x="10" y="13" width="2" height="1" fill="#808080"/><rect x="12" y="13" width="2" height="1" fill="#c0c0c0"/><rect x="14" y="13" width="1" height="1" fill="#808080"/><rect x="15" y="13" width="1" height="1" fill="#c0c0c0"/><rect x="16" y="13" width="1" height="1" fill="#000000"/><rect x="1" y="14" width="1" height="1" fill="#000000"/><rect x="2" y="14" width="1" height="1" fill="#808080"/><rect x="3" y="14" width="1" height="1" fill="#000000"/><rect x="4" y="14" width="1" height="1" fill="#a6caf0"/><rect x="5" y="14" width="1" height="1" fill="#ffffff"/><rect x="6" y="14" width="1" height="1" fill="#a6caf0"/><rect x="7" y="14" width="1" height="1" fill="#ffffff"/><rect x="8" y="14" width="1" height="1" fill="#a6caf0"/><rect x="9" y="14" width="1" height="1" fill="#000000"/><rect x="10" y="14" width="2" height="1" fill="#808080"/><rect x="12" y="14" width="2" height="1" fill="#c0c0c0"/><rect x="14" y="14" width="1" height="1" fill="#808080"/><rect x="15" y="14" width="1" height="1" fill="#c0c0c0"/><rect x="16" y="14" width="1" height="1" fill="#000000"/><rect x="1" y="15" width="1" height="1" fill="#000000"/><rect x="2" y="15" width="2" height="1" fill="#808080"/><rect x="4" y="15" width="1" height="1" fill="#000000"/><rect x="5" y="15" width="1" height="1" fill="#ffffff"/><rect x="6" y="15" width="1" height="1" fill="#a6caf0"/><rect x="7" y="15" width="1" height="1" fill="#ffffff"/><rect x="8" y="15" width="1" height="1" fill="#000000"/><rect x="9" y="15" width="3" height="1" fill="#808080"/><rect x="12" y="15" width="2" height="1" fill="#c0c0c0"/><rect x="14" y="15" width="1" height="1" fill="#808080"/><rect x="15" y="15" width="1" height="1" fill="#c0c0c0"/><rect x="16" y="15" width="1" height="1" fill="#000000"/><rect x="1" y="16" width="16" height="1" fill="#000000"/></svg>
<svg style="left:391px;top:45px" width="17" height="17" viewBox="0 0 17 17"><rect x="7" y="2" width="3" height="1" fill="#000000"/><rect x="8" y="3" width="1" height="1" fill="#000000"/><rect x="2" y="4" width="1" height="1" fill="#000000"/><rect x="6" y="4" width="5" height="1" fill="#000000"/><rect x="14" y="4" width="1" height="1" fill="#000000"/><rect x="1" y="5" width="2" height="1" fill="#000000"/><rect x="4" y="5" width="2" height="1" fill="#000000"/><rect x="6" y="5" width="2" height="1" fill="#ffffff"/><rect x="8" y="5" width="1" height="1" fill="#0000ff"/><rect x="9" y="5" width="2" height="1" fill="#ffffff"/><rect x="11" y="5" width="2" height="1" fill="#000000"/><rect x="14" y="5" width="2" height="1" fill="#000000"/><rect x="3" y="6" width="1" height="1" fill="#000000"/><rect x="4" y="6" width="4" height="1" fill="#ffffff"/><rect x="8" y="6" width="1" height="1" fill="#0000ff"/><rect x="9" y="6" width="3" height="1" fill="#ffffff"/><rect x="12" y="6" width="1" height="1" fill="#ff0000"/><rect x="13" y="6" width="1" height="1" fill="#000000"/><rect x="2" y="7" width="1" height="1" fill="#000000"/><rect x="3" y="7" width="8" height="1" fill="#ffffff"/><rect x="11" y="7" width="1" height="1" fill="#ff0000"/><rect x="12" y="7" width="2" height="1" fill="#ffffff"/><rect x="14" y="7" width="1" height="1" fill="#000000"/><rect x="2" y="8" width="1" height="1" fill="#000000"/><rect x="3" y="8" width="3" height="1" fill="#ffffff"/><rect x="6" y="8" width="1" height="1" fill="#ff0000"/><rect x="7" y="8" width="3" height="1" fill="#ffffff"/><rect x="10" y="8" width="1" height="1" fill="#ff0000"/><rect x="11" y="8" width="3" height="1" fill="#ffffff"/><rect x="14" y="8" width="1" height="1" fill="#000000"/><rect x="1" y="9" width="1" height="1" fill="#000000"/><rect x="2" y="9" width="5" height="1" fill="#ffffff"/><rect x="7" y="9" width="1" height="1" fill="#ff0000"/><rect x="8" y="9" width="1" height="1" fill="#ffffff"/><rect x="9" y="9" width="1" height="1" fill="#ff0000"/><rect x="10" y="9" width="5" height="1" fill="#ffffff"/><rect x="15" y="9" width="1" height="1" fill="#000000"/><rect x="1" y="10" width="1" height="1" fill="#000000"/><rect x="2" y="10" width="1" height="1" fill="#ffffff"/><rect x="3" y="10" width="2" height="1" fill="#0000ff"/><rect x="5" y="10" width="3" height="1" fill="#ffffff"/><rect x="8" y="10" width="1" height="1" fill="#ff0000"/><rect x="9" y="10" width="3" height="1" fill="#ffffff"/><rect x="12" y="10" width="2" height="1" fill="#0000ff"/><rect x="14" y="10" width="1" height="1" fill="#ffffff"/><rect x="15" y="10" width="1" height="1" fill="#000000"/><rect x="1" y="11" width="1" height="1" fill="#000000"/><rect x="2" y="11" width="6" height="1" fill="#ffffff"/><rect x="8" y="11" width="1" height="1" fill="#ff0000"/><rect x="9" y="11" width="6" height="1" fill="#ffffff"/><rect x="15" y="11" width="1" height="1" fill="#000000"/><rect x="1" y="12" width="1" height="1" fill="#000000"/><rect x="2" y="12" width="6" height="1" fill="#ffffff"/><rect x="8" y="12" width="1" height="1" fill="#ff0000"/><rect x="9" y="12" width="6" height="1" fill="#ffffff"/><rect x="15" y="12" width="1" height="1" fill="#000000"/><rect x="2" y="13" width="1" height="1" fill="#000000"/><rect x="3" y="13" width="11" height="1" fill="#ffffff"/><rect x="14" y="13" width="1" height="1" fill="#000000"/><rect x="2" y="14" width="1" height="1" fill="#000000"/><rect x="3" y="14" width="5" height="1" fill="#ffffff"/><rect x="8" y="14" width="1" height="1" fill="#0000ff"/><rect x="9" y="14" width="5" height="1" fill="#ffffff"/><rect x="14" y="14" width="1" height="1" fill="#000000"/><rect x="3" y="15" width="2" height="1" fill="#000000"/><rect x="5" y="15" width="3" height="1" fill="#ffffff"/><rect x="8" y="15" width="1" height="1" fill="#0000ff"/><rect x="9" y="15" width="3" height="1" fill="#ffffff"/><rect x="12" y="15" width="2" height="1" fill="#000000"/><rect x="5" y="16" width="7" height="1" fill="#000000"/></svg>
<svg style="left:415px;top:45px" width="17" height="16" viewBox="0 0 17 16"><rect x="2" y="2" width="14" height="1" fill="#0000ff"/><rect x="2" y="3" width="2" height="1" fill="#0000ff"/><rect x="4" y="3" width="1" height="1" fill="#000080"/><rect x="5" y="3" width="1" height="1" fill="#0000ff"/><rect x="6" y="3" width="1" height="1" fill="#000080"/><rect x="7" y="3" width="1" height="1" fill="#0000ff"/><rect x="8" y="3" width="1" height="1" fill="#000080"/><rect x="9" y="3" width="1" height="1" fill="#0000ff"/><rect x="10" y="3" width="1" height="1" fill="#000080"/><rect x="11" y="3" width="1" height="1" fill="#0000ff"/><rect x="12" y="3" width="1" height="1" fill="#000080"/><rect x="13" y="3" width="1" height="1" fill="#0000ff"/><rect x="14" y="3" width="1" height="1" fill="#000080"/><rect x="15" y="3" width="1" height="1" fill="#0000ff"/><rect x="2" y="4" width="1" height="1" fill="#0000ff"/><rect x="3" y="4" width="3" height="1" fill="#ffffff"/><rect x="6" y="4" width="1" height="1" fill="#0000ff"/><rect x="7" y="4" width="1" height="1" fill="#c0c0c0"/><rect x="8" y="4" width="1" height="1" fill="#a6caf0"/><rect x="9" y="4" width="1" height="1" fill="#c0c0c0"/><rect x="10" y="4" width="1" height="1" fill="#a6caf0"/><rect x="11" y="4" width="1" height="1" fill="#c0c0c0"/><rect x="12" y="4" width="1" height="1" fill="#a6caf0"/><rect x="13" y="4" width="1" height="1" fill="#c0c0c0"/><rect x="14" y="4" width="1" height="1" fill="#a6caf0"/><rect x="15" y="4" width="1" height="1" fill="#0000ff"/><rect x="2" y="5" width="1" height="1" fill="#0000ff"/><rect x="3" y="5" width="3" height="1" fill="#ffffff"/><rect x="6" y="5" width="1" height="1" fill="#0000ff"/><rect x="7" y="5" width="8" height="1" fill="#c0c0c0"/><rect x="15" y="5" width="1" height="1" fill="#0000ff"/><rect x="2" y="6" width="1" height="1" fill="#0000ff"/><rect x="3" y="6" width="1" height="1" fill="#ffffff"/><rect x="4" y="6" width="1" height="1" fill="#000000"/><rect x="5" y="6" width="1" height="1" fill="#ffffff"/><rect x="6" y="6" width="1" height="1" fill="#0000ff"/><rect x="7" y="6" width="1" height="1" fill="#c0c0c0"/><rect x="8" y="6" width="1" height="1" fill="#a6caf0"/><rect x="9" y="6" width="1" height="1" fill="#ff0000"/><rect x="10" y="6" width="1" height="1" fill="#c0c0c0"/><rect x="11" y="6" width="1" height="1" fill="#a6caf0"/><rect x="12" y="6" width="1" height="1" fill="#c0c0c0"/><rect x="13" y="6" width="1" height="1" fill="#a6caf0"/><rect x="14" y="6" width="1" height="1" fill="#c0c0c0"/><rect x="15" y="6" width="1" height="1" fill="#0000ff"/><rect x="2" y="7" width="1" height="1" fill="#0000ff"/><rect x="3" y="7" width="3" height="1" fill="#ffffff"/><rect x="6" y="7" width="1" height="1" fill="#0000ff"/><rect x="7" y="7" width="2" height="1" fill="#c0c0c0"/><rect x="9" y="7" width="2" height="1" fill="#ff0000"/><rect x="11" y="7" width="4" height="1" fill="#c0c0c0"/><rect x="15" y="7" width="1" height="1" fill="#0000ff"/><rect x="2" y="8" width="1" height="1" fill="#0000ff"/><rect x="3" y="8" width="1" height="1" fill="#ffffff"/><rect x="4" y="8" width="1" height="1" fill="#000000"/><rect x="5" y="8" width="1" height="1" fill="#ffffff"/><rect x="6" y="8" width="1" height="1" fill="#ff0000"/><rect x="7" y="8" width="1" height="1" fill="#000000"/><rect x="8" y="8" width="1" height="1" fill="#ff0000"/><rect x="9" y="8" width="1" height="1" fill="#000000"/><rect x="10" y="8" width="1" height="1" fill="#ff0000"/><rect x="11" y="8" width="1" height="1" fill="#000000"/><rect x="12" y="8" width="1" height="1" fill="#ff0000"/><rect x="13" y="8" width="1" height="1" fill="#c0c0c0"/><rect x="14" y="8" width="1" height="1" fill="#a6caf0"/><rect x="15" y="8" width="1" height="1" fill="#0000ff"/><rect x="2" y="9" width="1" height="1" fill="#0000ff"/><rect x="3" y="9" width="3" height="1" fill="#ffffff"/><rect x="6" y="9" width="1" height="1" fill="#000000"/><rect x="7" y="9" width="1" height="1" fill="#ff0000"/><rect x="8" y="9" width="1" height="1" fill="#000000"/><rect x="9" y="9" width="1" height="1" fill="#ff0000"/><rect x="10" y="9" width="1" height="1" fill="#000000"/><rect x="11" y="9" width="1" height="1" fill="#ff0000"/><rect x="12" y="9" width="1" height="1" fill="#000000"/><rect x="13" y="9" width="1" height="1" fill="#ff0000"/><rect x="14" y="9" width="1" height="1" fill="#c0c0c0"/><rect x="15" y="9" width="1" height="1" fill="#0000ff"/><rect x="2" y="10" width="1" height="1" fill="#0000ff"/><rect x="3" y="10" width="1" height="1" fill="#ffffff"/><rect x="4" y="10" width="1" height="1" fill="#000000"/><rect x="5" y="10" width="1" height="1" fill="#ffffff"/><rect x="6" y="10" width="1" height="1" fill="#ff0000"/><rect x="7" y="10" width="1" height="1" fill="#000000"/><rect x="8" y="10" width="1" height="1" fill="#ff0000"/><rect x="9" y="10" width="1" height="1" fill="#000000"/><rect x="10" y="10" width="1" height="1" fill="#ff0000"/><rect x="11" y="10" width="1" height="1" fill="#000000"/><rect x="12" y="10" width="1" height="1" fill="#ff0000"/><rect x="13" y="10" width="1" height="1" fill="#c0c0c0"/><rect x="14" y="10" width="1" height="1" fill="#a6caf0"/><rect x="15" y="10" width="1" height="1" fill="#0000ff"/><rect x="2" y="11" width="1" height="1" fill="#0000ff"/><rect x="3" y="11" width="3" height="1" fill="#ffffff"/><rect x="6" y="11" width="1" height="1" fill="#0000ff"/><rect x="7" y="11" width="2" height="1" fill="#c0c0c0"/><rect x="9" y="11" width="2" height="1" fill="#ff0000"/><rect x="11" y="11" width="4" height="1" fill="#c0c0c0"/><rect x="15" y="11" width="1" height="1" fill="#0000ff"/><rect x="2" y="12" width="1" height="1" fill="#0000ff"/><rect x="3" y="12" width="1" height="1" fill="#ffffff"/><rect x="4" y="12" width="1" height="1" fill="#000000"/><rect x="5" y="12" width="1" height="1" fill="#ffffff"/><rect x="6" y="12" width="1" height="1" fill="#0000ff"/><rect x="7" y="12" width="1" height="1" fill="#c0c0c0"/><rect x="8" y="12" width="1" height="1" fill="#a6caf0"/><rect x="9" y="12" width="1" height="1" fill="#ff0000"/><rect x="10" y="12" width="1" height="1" fill="#c0c0c0"/><rect x="11" y="12" width="1" height="1" fill="#a6caf0"/><rect x="12" y="12" width="1" height="1" fill="#c0c0c0"/><rect x="13" y="12" width="1" height="1" fill="#a6caf0"/><rect x="14" y="12" width="1" height="1" fill="#c0c0c0"/><rect x="15" y="12" width="1" height="1" fill="#0000ff"/><rect x="2" y="13" width="1" height="1" fill="#0000ff"/><rect x="3" y="13" width="3" height="1" fill="#ffffff"/><rect x="6" y="13" width="1" height="1" fill="#0000ff"/><rect x="7" y="13" width="8" height="1" fill="#c0c0c0"/><rect x="15" y="13" width="1" height="1" fill="#0000ff"/><rect x="2" y="14" width="1" height="1" fill="#0000ff"/><rect x="3" y="14" width="3" height="1" fill="#ffffff"/><rect x="6" y="14" width="1" height="1" fill="#0000ff"/><rect x="7" y="14" width="1" height="1" fill="#c0c0c0"/><rect x="8" y="14" width="1" height="1" fill="#a6caf0"/><rect x="9" y="14" width="1" height="1" fill="#c0c0c0"/><rect x="10" y="14" width="1" height="1" fill="#a6caf0"/><rect x="11" y="14" width="1" height="1" fill="#c0c0c0"/><rect x="12" y="14" width="1" height="1" fill="#a6caf0"/><rect x="13" y="14" width="1" height="1" fill="#c0c0c0"/><rect x="14" y="14" width="1" height="1" fill="#a6caf0"/><rect x="15" y="14" width="1" height="1" fill="#0000ff"/><rect x="2" y="15" width="14" height="1" fill="#0000ff"/></svg>
<svg style="left:447px;top:45px" width="17" height="17" viewBox="0 0 17 17"><rect x="8" y="2" width="2" height="1" fill="#800080"/><rect x="7" y="3" width="1" height="1" fill="#800080"/><rect x="8" y="3" width="1" height="1" fill="#ffffff"/><rect x="9" y="3" width="2" height="1" fill="#800080"/><rect x="11" y="3" width="1" height="1" fill="#000000"/><rect x="6" y="4" width="1" height="1" fill="#800080"/><rect x="7" y="4" width="1" height="1" fill="#ffffff"/><rect x="8" y="4" width="4" height="1" fill="#800080"/><rect x="12" y="4" width="1" height="1" fill="#000000"/><rect x="5" y="5" width="1" height="1" fill="#800080"/><rect x="6" y="5" width="1" height="1" fill="#ffffff"/><rect x="7" y="5" width="2" height="1" fill="#800080"/><rect x="9" y="5" width="2" height="1" fill="#ffff00"/><rect x="11" y="5" width="2" height="1" fill="#800080"/><rect x="13" y="5" width="1" height="1" fill="#000000"/><rect x="4" y="6" width="1" height="1" fill="#800080"/><rect x="5" y="6" width="1" height="1" fill="#ffffff"/><rect x="6" y="6" width="2" height="1" fill="#800080"/><rect x="8" y="6" width="1" height="1" fill="#ffff00"/><rect x="9" y="6" width="2" height="1" fill="#800080"/><rect x="11" y="6" width="1" height="1" fill="#ffff00"/><rect x="12" y="6" width="2" height="1" fill="#800080"/><rect x="14" y="6" width="1" height="1" fill="#000000"/><rect x="3" y="7" width="1" height="1" fill="#800080"/><rect x="4" y="7" width="1" height="1" fill="#ffffff"/><rect x="5" y="7" width="5" height="1" fill="#800080"/><rect x="10" y="7" width="1" height="1" fill="#ffff00"/><rect x="11" y="7" width="4" height="1" fill="#800080"/><rect x="15" y="7" width="1" height="1" fill="#000000"/><rect x="2" y="8" width="1" height="1" fill="#800080"/><rect x="3" y="8" width="1" height="1" fill="#ffffff"/><rect x="4" y="8" width="5" height="1" fill="#800080"/><rect x="9" y="8" width="1" height="1" fill="#ffff00"/><rect x="10" y="8" width="5" height="1" fill="#800080"/><rect x="15" y="8" width="1" height="1" fill="#000000"/><rect x="2" y="9" width="6" height="1" fill="#800080"/><rect x="8" y="9" width="1" height="1" fill="#ffff00"/><rect x="9" y="9" width="6" height="1" fill="#800080"/><rect x="15" y="9" width="1" height="1" fill="#000000"/><rect x="2" y="10" width="1" height="1" fill="#000000"/><rect x="3" y="10" width="11" height="1" fill="#800080"/><rect x="14" y="10" width="1" height="1" fill="#000000"/><rect x="2" y="11" width="1" height="1" fill="#800080"/><rect x="3" y="11" width="1" height="1" fill="#ffffff"/><rect x="4" y="11" width="3" height="1" fill="#800080"/><rect x="7" y="11" width="2" height="1" fill="#ffff00"/><rect x="9" y="11" width="4" height="1" fill="#800080"/><rect x="13" y="11" width="1" height="1" fill="#000000"/><rect x="14" y="11" width="1" height="1" fill="#c0c0c0"/><rect x="15" y="11" width="1" height="1" fill="#000000"/><rect x="3" y="12" width="1" height="1" fill="#800080"/><rect x="4" y="12" width="2" height="1" fill="#ffffff"/><rect x="6" y="12" width="6" height="1" fill="#800080"/><rect x="12" y="12" width="1" height="1" fill="#000000"/><rect x="13" y="12" width="2" height="1" fill="#c0c0c0"/><rect x="15" y="12" width="1" height="1" fill="#000000"/><rect x="4" y="13" width="1" height="1" fill="#000000"/><rect x="5" y="13" width="1" height="1" fill="#800080"/><rect x="6" y="13" width="2" height="1" fill="#ffffff"/><rect x="8" y="13" width="3" height="1" fill="#800080"/><rect x="11" y="13" width="1" height="1" fill="#000000"/><rect x="12" y="13" width="2" height="1" fill="#c0c0c0"/><rect x="14" y="13" width="1" height="1" fill="#000000"/><rect x="5" y="14" width="1" height="1" fill="#000000"/><rect x="6" y="14" width="2" height="1" fill="#800080"/><rect x="8" y="14" width="2" height="1" fill="#ffffff"/><rect x="10" y="14" width="1" height="1" fill="#000000"/><rect x="11" y="14" width="2" height="1" fill="#c0c0c0"/><rect x="13" y="14" width="1" height="1" fill="#000000"/><rect x="6" y="15" width="1" height="1" fill="#000000"/><rect x="7" y="15" width="2" height="1" fill="#800080"/><rect x="9" y="15" width="1" height="1" fill="#000000"/><rect x="10" y="15" width="2" height="1" fill="#c0c0c0"/><rect x="12" y="15" width="1" height="1" fill="#000000"/><rect x="7" y="16" width="5" height="1" fill="#000000"/></svg>
<svg style="left:471px;top:45px" width="18" height="17" viewBox="0 0 18 17"><rect x="8" y="1" width="2" height="1" fill="#000000"/><rect x="7" y="2" width="1" height="1" fill="#808000"/><rect x="8" y="2" width="2" height="1" fill="#000000"/><rect x="6" y="3" width="1" height="1" fill="#808000"/><rect x="7" y="3" width="1" height="1" fill="#f4ec8c"/><rect x="8" y="3" width="1" height="1" fill="#ffffff"/><rect x="9" y="3" width="1" height="1" fill="#000000"/><rect x="5" y="4" width="1" height="1" fill="#808000"/><rect x="6" y="4" width="1" height="1" fill="#f4ec8c"/><rect x="7" y="4" width="1" height="1" fill="#ffffff"/><rect x="8" y="4" width="1" height="1" fill="#f4ec8c"/><rect x="9" y="4" width="1" height="1" fill="#000000"/><rect x="10" y="4" width="1" height="1" fill="#ffffff"/><rect x="14" y="4" width="1" height="1" fill="#808080"/><rect x="4" y="5" width="1" height="1" fill="#808000"/><rect x="5" y="5" width="1" height="1" fill="#f4ec8c"/><rect x="6" y="5" width="1" height="1" fill="#ffffff"/><rect x="7" y="5" width="1" height="1" fill="#f4ec8c"/><rect x="8" y="5" width="1" height="1" fill="#ffffff"/><rect x="9" y="5" width="1" height="1" fill="#000000"/><rect x="10" y="5" width="1" height="1" fill="#ffffff"/><rect x="13" y="5" width="1" height="1" fill="#808080"/><rect x="3" y="6" width="1" height="1" fill="#808000"/><rect x="4" y="6" width="1" height="1" fill="#f4ec8c"/><rect x="5" y="6" width="1" height="1" fill="#ffffff"/><rect x="6" y="6" width="1" height="1" fill="#f4ec8c"/><rect x="7" y="6" width="1" height="1" fill="#ffffff"/><rect x="8" y="6" width="1" height="1" fill="#f4ec8c"/><rect x="9" y="6" width="1" height="1" fill="#000000"/><rect x="10" y="6" width="1" height="1" fill="#ffffff"/><rect x="12" y="6" width="1" height="1" fill="#808080"/><rect x="1" y="7" width="2" height="1" fill="#808000"/><rect x="3" y="7" width="1" height="1" fill="#f4ec8c"/><rect x="4" y="7" width="1" height="1" fill="#ffffff"/><rect x="5" y="7" width="1" height="1" fill="#f4ec8c"/><rect x="6" y="7" width="1" height="1" fill="#ffffff"/><rect x="7" y="7" width="1" height="1" fill="#f4ec8c"/><rect x="8" y="7" width="1" height="1" fill="#000000"/><rect x="9" y="7" width="2" height="1" fill="#ffffff"/><rect x="1" y="8" width="1" height="1" fill="#808000"/><rect x="2" y="8" width="1" height="1" fill="#f4ec8c"/><rect x="3" y="8" width="1" height="1" fill="#ffffff"/><rect x="4" y="8" width="1" height="1" fill="#f4ec8c"/><rect x="5" y="8" width="1" height="1" fill="#ffffff"/><rect x="6" y="8" width="1" height="1" fill="#f4ec8c"/><rect x="7" y="8" width="1" height="1" fill="#ffffff"/><rect x="8" y="8" width="1" height="1" fill="#000000"/><rect x="9" y="8" width="2" height="1" fill="#ffffff"/><rect x="11" y="8" width="1" height="1" fill="#000000"/><rect x="1" y="9" width="1" height="1" fill="#808000"/><rect x="2" y="9" width="1" height="1" fill="#ffffff"/><rect x="3" y="9" width="1" height="1" fill="#f4ec8c"/><rect x="4" y="9" width="1" height="1" fill="#ffffff"/><rect x="5" y="9" width="1" height="1" fill="#f4ec8c"/><rect x="6" y="9" width="1" height="1" fill="#ffffff"/><rect x="7" y="9" width="1" height="1" fill="#f4ec8c"/><rect x="8" y="9" width="1" height="1" fill="#000000"/><rect x="9" y="9" width="1" height="1" fill="#ffffff"/><rect x="10" y="9" width="2" height="1" fill="#000000"/><rect x="13" y="9" width="4" height="1" fill="#808080"/><rect x="1" y="10" width="1" height="1" fill="#808000"/><rect x="2" y="10" width="1" height="1" fill="#f4ec8c"/><rect x="3" y="10" width="1" height="1" fill="#ffffff"/><rect x="4" y="10" width="1" height="1" fill="#f4ec8c"/><rect x="5" y="10" width="1" height="1" fill="#ffffff"/><rect x="6" y="10" width="1" height="1" fill="#f4ec8c"/><rect x="7" y="10" width="1" height="1" fill="#ffffff"/><rect x="8" y="10" width="1" height="1" fill="#000000"/><rect x="9" y="10" width="2" height="1" fill="#ffffff"/><rect x="11" y="10" width="1" height="1" fill="#000000"/><rect x="1" y="11" width="2" height="1" fill="#000000"/><rect x="3" y="11" width="1" height="1" fill="#ffffff"/><rect x="4" y="11" width="1" height="1" fill="#f4ec8c"/><rect x="5" y="11" width="1" height="1" fill="#ffffff"/><rect x="6" y="11" width="1" height="1" fill="#f4ec8c"/><rect x="7" y="11" width="1" height="1" fill="#ffffff"/><rect x="8" y="11" width="1" height="1" fill="#f4ec8c"/><rect x="9" y="11" width="1" height="1" fill="#000000"/><rect x="10" y="11" width="1" height="1" fill="#ffffff"/><rect x="3" y="12" width="1" height="1" fill="#000000"/><rect x="4" y="12" width="1" height="1" fill="#f4ec8c"/><rect x="5" y="12" width="1" height="1" fill="#ffffff"/><rect x="6" y="12" width="1" height="1" fill="#f4ec8c"/><rect x="7" y="12" width="1" height="1" fill="#ffffff"/><rect x="8" y="12" width="1" height="1" fill="#f4ec8c"/><rect x="9" y="12" width="1" height="1" fill="#000000"/><rect x="10" y="12" width="1" height="1" fill="#ffffff"/><rect x="12" y="12" width="1" height="1" fill="#808080"/><rect x="4" y="13" width="1" height="1" fill="#000000"/><rect x="5" y="13" width="1" height="1" fill="#ffffff"/><rect x="6" y="13" width="1" height="1" fill="#f4ec8c"/><rect x="7" y="13" width="1" height="1" fill="#ffffff"/><rect x="8" y="13" width="1" height="1" fill="#f4ec8c"/><rect x="9" y="13" width="1" height="1" fill="#000000"/><rect x="10" y="13" width="1" height="1" fill="#ffffff"/><rect x="13" y="13" width="1" height="1" fill="#808080"/><rect x="5" y="14" width="1" height="1" fill="#000000"/><rect x="6" y="14" width="1" height="1" fill="#f4ec8c"/><rect x="7" y="14" width="1" height="1" fill="#ffffff"/><rect x="8" y="14" width="1" height="1" fill="#f4ec8c"/><rect x="9" y="14" width="1" height="1" fill="#000000"/><rect x="10" y="14" width="1" height="1" fill="#ffffff"/><rect x="14" y="14" width="1" height="1" fill="#808080"/><rect x="6" y="15" width="1" height="1" fill="#000000"/><rect x="7" y="15" width="1" height="1" fill="#ffffff"/><rect x="8" y="15" width="1" height="1" fill="#f4ec8c"/><rect x="9" y="15" width="1" height="1" fill="#000000"/><rect x="7" y="16" width="3" height="1" fill="#000000"/></svg>
<svg style="left:496px;top:45px" width="17" height="17" viewBox="0 0 17 17"><rect x="6" y="2" width="5" height="1" fill="#0000b0"/><rect x="4" y="3" width="3" height="1" fill="#0000b0"/><rect x="7" y="3" width="3" height="1" fill="#ffffff"/><rect x="10" y="3" width="3" height="1" fill="#0000b0"/><rect x="3" y="4" width="4" height="1" fill="#0000b0"/><rect x="7" y="4" width="3" height="1" fill="#ffffff"/><rect x="10" y="4" width="4" height="1" fill="#0000b0"/><rect x="2" y="5" width="5" height="1" fill="#0000b0"/><rect x="7" y="5" width="3" height="1" fill="#ffffff"/><rect x="10" y="5" width="5" height="1" fill="#0000b0"/><rect x="2" y="6" width="13" height="1" fill="#0000b0"/><rect x="1" y="7" width="5" height="1" fill="#0000b0"/><rect x="6" y="7" width="4" height="1" fill="#ffffff"/><rect x="10" y="7" width="6" height="1" fill="#0000b0"/><rect x="1" y="8" width="6" height="1" fill="#0000b0"/><rect x="7" y="8" width="3" height="1" fill="#ffffff"/><rect x="10" y="8" width="6" height="1" fill="#0000b0"/><rect x="1" y="9" width="6" height="1" fill="#0000b0"/><rect x="7" y="9" width="3" height="1" fill="#ffffff"/><rect x="10" y="9" width="6" height="1" fill="#0000b0"/><rect x="1" y="10" width="6" height="1" fill="#0000b0"/><rect x="7" y="10" width="3" height="1" fill="#ffffff"/><rect x="10" y="10" width="6" height="1" fill="#0000b0"/><rect x="1" y="11" width="6" height="1" fill="#0000b0"/><rect x="7" y="11" width="3" height="1" fill="#ffffff"/><rect x="10" y="11" width="6" height="1" fill="#0000b0"/><rect x="2" y="12" width="5" height="1" fill="#0000b0"/><rect x="7" y="12" width="3" height="1" fill="#ffffff"/><rect x="10" y="12" width="5" height="1" fill="#0000b0"/><rect x="2" y="13" width="5" height="1" fill="#0000b0"/><rect x="7" y="13" width="3" height="1" fill="#ffffff"/><rect x="10" y="13" width="5" height="1" fill="#0000b0"/><rect x="3" y="14" width="3" height="1" fill="#0000b0"/><rect x="6" y="14" width="5" height="1" fill="#ffffff"/><rect x="11" y="14" width="3" height="1" fill="#0000b0"/><rect x="4" y="15" width="9" height="1" fill="#0000b0"/><rect x="6" y="16" width="5" height="1" fill="#0000b0"/></svg>
<svg style="left:202px;top:49px" width="14" height="11" viewBox="0 0 14 11"><rect x="2" y="0" width="1" height="1" fill="#0000b8"/><rect x="9" y="0" width="3" height="1" fill="#0000b8"/><rect x="0" y="1" width="3" height="1" fill="#0000b8"/><rect x="3" y="1" width="1" height="1" fill="#8a8a9a"/><rect x="8" y="1" width="1" height="1" fill="#0000b8"/><rect x="10" y="1" width="2" height="1" fill="#8a8a9a"/><rect x="12" y="1" width="1" height="1" fill="#0000b8"/><rect x="1" y="2" width="1" height="1" fill="#8a8a9a"/><rect x="2" y="2" width="1" height="1" fill="#0000b8"/><rect x="3" y="2" width="1" height="1" fill="#8a8a9a"/><rect x="8" y="2" width="1" height="1" fill="#0000b8"/><rect x="9" y="2" width="1" height="1" fill="#8a8a9a"/><rect x="12" y="2" width="1" height="1" fill="#0000b8"/><rect x="13" y="2" width="1" height="1" fill="#8a8a9a"/><rect x="2" y="3" width="1" height="1" fill="#0000b8"/><rect x="3" y="3" width="1" height="1" fill="#8a8a9a"/><rect x="5" y="3" width="1" height="1" fill="#0000b8"/><rect x="9" y="3" width="1" height="1" fill="#8a8a9a"/><rect x="12" y="3" width="1" height="1" fill="#0000b8"/><rect x="13" y="3" width="1" height="1" fill="#8a8a9a"/><rect x="2" y="4" width="1" height="1" fill="#0000b8"/><rect x="3" y="4" width="1" height="1" fill="#8a8a9a"/><rect x="6" y="4" width="1" height="1" fill="#8a8a9a"/><rect x="11" y="4" width="1" height="1" fill="#0000b8"/><rect x="13" y="4" width="1" height="1" fill="#8a8a9a"/><rect x="2" y="5" width="1" height="1" fill="#0000b8"/><rect x="3" y="5" width="1" height="1" fill="#8a8a9a"/><rect x="10" y="5" width="1" height="1" fill="#0000b8"/><rect x="12" y="5" width="1" height="1" fill="#8a8a9a"/><rect x="2" y="6" width="1" height="1" fill="#0000b8"/><rect x="3" y="6" width="1" height="1" fill="#8a8a9a"/><rect x="9" y="6" width="1" height="1" fill="#0000b8"/><rect x="11" y="6" width="1" height="1" fill="#8a8a9a"/><rect x="2" y="7" width="1" height="1" fill="#0000b8"/><rect x="3" y="7" width="1" height="1" fill="#8a8a9a"/><rect x="8" y="7" width="1" height="1" fill="#0000b8"/><rect x="10" y="7" width="1" height="1" fill="#8a8a9a"/><rect x="2" y="8" width="1" height="1" fill="#0000b8"/><rect x="3" y="8" width="1" height="1" fill="#8a8a9a"/><rect x="8" y="8" width="1" height="1" fill="#0000b8"/><rect x="9" y="8" width="1" height="1" fill="#8a8a9a"/><rect x="2" y="9" width="1" height="1" fill="#0000b8"/><rect x="3" y="9" width="1" height="1" fill="#8a8a9a"/><rect x="5" y="9" width="1" height="1" fill="#0000b8"/><rect x="8" y="9" width="5" height="1" fill="#0000b8"/><rect x="3" y="10" width="1" height="1" fill="#8a8a9a"/><rect x="6" y="10" width="1" height="1" fill="#8a8a9a"/><rect x="9" y="10" width="5" height="1" fill="#8a8a9a"/></svg>
<svg style="left:226px;top:49px" width="14" height="11" viewBox="0 0 14 11"><rect x="2" y="0" width="1" height="1" fill="#0000b8"/><rect x="12" y="0" width="1" height="1" fill="#0000b8"/><rect x="0" y="1" width="3" height="1" fill="#0000b8"/><rect x="3" y="1" width="1" height="1" fill="#8a8a9a"/><rect x="10" y="1" width="3" height="1" fill="#0000b8"/><rect x="13" y="1" width="1" height="1" fill="#8a8a9a"/><rect x="1" y="2" width="1" height="1" fill="#8a8a9a"/><rect x="2" y="2" width="1" height="1" fill="#0000b8"/><rect x="3" y="2" width="1" height="1" fill="#8a8a9a"/><rect x="11" y="2" width="1" height="1" fill="#8a8a9a"/><rect x="12" y="2" width="1" height="1" fill="#0000b8"/><rect x="13" y="2" width="1" height="1" fill="#8a8a9a"/><rect x="2" y="3" width="1" height="1" fill="#0000b8"/><rect x="3" y="3" width="1" height="1" fill="#8a8a9a"/><rect x="7" y="3" width="1" height="1" fill="#0000b8"/><rect x="12" y="3" width="1" height="1" fill="#0000b8"/><rect x="13" y="3" width="1" height="1" fill="#8a8a9a"/><rect x="2" y="4" width="1" height="1" fill="#0000b8"/><rect x="3" y="4" width="1" height="1" fill="#8a8a9a"/><rect x="8" y="4" width="1" height="1" fill="#8a8a9a"/><rect x="12" y="4" width="1" height="1" fill="#0000b8"/><rect x="13" y="4" width="1" height="1" fill="#8a8a9a"/><rect x="2" y="5" width="1" height="1" fill="#0000b8"/><rect x="3" y="5" width="1" height="1" fill="#8a8a9a"/><rect x="12" y="5" width="1" height="1" fill="#0000b8"/><rect x="13" y="5" width="1" height="1" fill="#8a8a9a"/><rect x="2" y="6" width="1" height="1" fill="#0000b8"/><rect x="3" y="6" width="1" height="1" fill="#8a8a9a"/><rect x="12" y="6" width="1" height="1" fill="#0000b8"/><rect x="13" y="6" width="1" height="1" fill="#8a8a9a"/><rect x="2" y="7" width="1" height="1" fill="#0000b8"/><rect x="3" y="7" width="1" height="1" fill="#8a8a9a"/><rect x="12" y="7" width="1" height="1" fill="#0000b8"/><rect x="13" y="7" width="1" height="1" fill="#8a8a9a"/><rect x="2" y="8" width="1" height="1" fill="#0000b8"/><rect x="3" y="8" width="1" height="1" fill="#8a8a9a"/><rect x="12" y="8" width="1" height="1" fill="#0000b8"/><rect x="13" y="8" width="1" height="1" fill="#8a8a9a"/><rect x="2" y="9" width="1" height="1" fill="#0000b8"/><rect x="3" y="9" width="1" height="1" fill="#8a8a9a"/><rect x="7" y="9" width="1" height="1" fill="#0000b8"/><rect x="12" y="9" width="1" height="1" fill="#0000b8"/><rect x="13" y="9" width="1" height="1" fill="#8a8a9a"/><rect x="3" y="10" width="1" height="1" fill="#8a8a9a"/><rect x="8" y="10" width="1" height="1" fill="#8a8a9a"/><rect x="13" y="10" width="1" height="1" fill="#8a8a9a"/></svg>
<svg style="left:250px;top:49px" width="14" height="11" viewBox="0 0 14 11"><rect x="1" y="0" width="3" height="1" fill="#0000b8"/><rect x="12" y="0" width="1" height="1" fill="#0000b8"/><rect x="0" y="1" width="1" height="1" fill="#0000b8"/><rect x="2" y="1" width="2" height="1" fill="#8a8a9a"/><rect x="4" y="1" width="1" height="1" fill="#0000b8"/><rect x="10" y="1" width="3" height="1" fill="#0000b8"/><rect x="13" y="1" width="1" height="1" fill="#8a8a9a"/><rect x="0" y="2" width="1" height="1" fill="#0000b8"/><rect x="1" y="2" width="1" height="1" fill="#8a8a9a"/><rect x="4" y="2" width="1" height="1" fill="#0000b8"/><rect x="5" y="2" width="1" height="1" fill="#8a8a9a"/><rect x="11" y="2" width="1" height="1" fill="#8a8a9a"/><rect x="12" y="2" width="1" height="1" fill="#0000b8"/><rect x="13" y="2" width="1" height="1" fill="#8a8a9a"/><rect x="1" y="3" width="1" height="1" fill="#8a8a9a"/><rect x="4" y="3" width="1" height="1" fill="#0000b8"/><rect x="5" y="3" width="1" height="1" fill="#8a8a9a"/><rect x="7" y="3" width="1" height="1" fill="#0000b8"/><rect x="12" y="3" width="1" height="1" fill="#0000b8"/><rect x="13" y="3" width="1" height="1" fill="#8a8a9a"/><rect x="3" y="4" width="1" height="1" fill="#0000b8"/><rect x="5" y="4" width="1" height="1" fill="#8a8a9a"/><rect x="8" y="4" width="1" height="1" fill="#8a8a9a"/><rect x="12" y="4" width="1" height="1" fill="#0000b8"/><rect x="13" y="4" width="1" height="1" fill="#8a8a9a"/><rect x="2" y="5" width="1" height="1" fill="#0000b8"/><rect x="4" y="5" width="1" height="1" fill="#8a8a9a"/><rect x="12" y="5" width="1" height="1" fill="#0000b8"/><rect x="13" y="5" width="1" height="1" fill="#8a8a9a"/><rect x="1" y="6" width="1" height="1" fill="#0000b8"/><rect x="3" y="6" width="1" height="1" fill="#8a8a9a"/><rect x="12" y="6" width="1" height="1" fill="#0000b8"/><rect x="13" y="6" width="1" height="1" fill="#8a8a9a"/><rect x="0" y="7" width="1" height="1" fill="#0000b8"/><rect x="2" y="7" width="1" height="1" fill="#8a8a9a"/><rect x="12" y="7" width="1" height="1" fill="#0000b8"/><rect x="13" y="7" width="1" height="1" fill="#8a8a9a"/><rect x="0" y="8" width="1" height="1" fill="#0000b8"/><rect x="1" y="8" width="1" height="1" fill="#8a8a9a"/><rect x="12" y="8" width="1" height="1" fill="#0000b8"/><rect x="13" y="8" width="1" height="1" fill="#8a8a9a"/><rect x="0" y="9" width="5" height="1" fill="#0000b8"/><rect x="7" y="9" width="1" height="1" fill="#0000b8"/><rect x="12" y="9" width="1" height="1" fill="#0000b8"/><rect x="13" y="9" width="1" height="1" fill="#8a8a9a"/><rect x="1" y="10" width="5" height="1" fill="#8a8a9a"/><rect x="8" y="10" width="1" height="1" fill="#8a8a9a"/><rect x="13" y="10" width="1" height="1" fill="#8a8a9a"/></svg>
<svg style="left:180px;top:50px" width="10" height="11" viewBox="0 0 10 11"><rect x="2" y="0" width="1" height="1" fill="#0000b8"/><rect x="4" y="0" width="1" height="1" fill="#0000b8"/><rect x="1" y="1" width="1" height="1" fill="#0000b8"/><rect x="3" y="1" width="1" height="1" fill="#8a8a9a"/><rect x="5" y="1" width="1" height="1" fill="#8a8a9a"/><rect x="7" y="1" width="1" height="1" fill="#0000b8"/><rect x="1" y="2" width="1" height="1" fill="#0000b8"/><rect x="2" y="2" width="1" height="1" fill="#8a8a9a"/><rect x="4" y="2" width="1" height="1" fill="#0000b8"/><rect x="7" y="2" width="1" height="1" fill="#0000b8"/><rect x="8" y="2" width="1" height="1" fill="#8a8a9a"/><rect x="0" y="3" width="3" height="1" fill="#0000b8"/><rect x="4" y="3" width="1" height="1" fill="#0000b8"/><rect x="5" y="3" width="1" height="1" fill="#8a8a9a"/><rect x="6" y="3" width="3" height="1" fill="#0000b8"/><rect x="1" y="4" width="1" height="1" fill="#0000b8"/><rect x="2" y="4" width="2" height="1" fill="#8a8a9a"/><rect x="4" y="4" width="1" height="1" fill="#0000b8"/><rect x="5" y="4" width="1" height="1" fill="#8a8a9a"/><rect x="7" y="4" width="1" height="1" fill="#0000b8"/><rect x="8" y="4" width="2" height="1" fill="#8a8a9a"/><rect x="1" y="5" width="1" height="1" fill="#0000b8"/><rect x="2" y="5" width="1" height="1" fill="#8a8a9a"/><rect x="4" y="5" width="1" height="1" fill="#0000b8"/><rect x="5" y="5" width="1" height="1" fill="#8a8a9a"/><rect x="7" y="5" width="1" height="1" fill="#0000b8"/><rect x="8" y="5" width="1" height="1" fill="#8a8a9a"/><rect x="1" y="6" width="1" height="1" fill="#0000b8"/><rect x="2" y="6" width="1" height="1" fill="#8a8a9a"/><rect x="4" y="6" width="1" height="1" fill="#0000b8"/><rect x="5" y="6" width="1" height="1" fill="#8a8a9a"/><rect x="7" y="6" width="1" height="1" fill="#0000b8"/><rect x="8" y="6" width="1" height="1" fill="#8a8a9a"/><rect x="1" y="7" width="1" height="1" fill="#0000b8"/><rect x="2" y="7" width="1" height="1" fill="#8a8a9a"/><rect x="4" y="7" width="1" height="1" fill="#0000b8"/><rect x="5" y="7" width="1" height="1" fill="#8a8a9a"/><rect x="7" y="7" width="1" height="1" fill="#0000b8"/><rect x="8" y="7" width="1" height="1" fill="#8a8a9a"/><rect x="1" y="8" width="1" height="1" fill="#0000b8"/><rect x="2" y="8" width="1" height="1" fill="#8a8a9a"/><rect x="4" y="8" width="1" height="1" fill="#0000b8"/><rect x="5" y="8" width="1" height="1" fill="#8a8a9a"/><rect x="7" y="8" width="1" height="1" fill="#0000b8"/><rect x="8" y="8" width="1" height="1" fill="#8a8a9a"/><rect x="1" y="9" width="1" height="1" fill="#0000b8"/><rect x="2" y="9" width="1" height="1" fill="#8a8a9a"/><rect x="4" y="9" width="1" height="1" fill="#0000b8"/><rect x="5" y="9" width="1" height="1" fill="#8a8a9a"/><rect x="8" y="9" width="1" height="1" fill="#0000b8"/><rect x="2" y="10" width="1" height="1" fill="#8a8a9a"/><rect x="5" y="10" width="1" height="1" fill="#8a8a9a"/><rect x="9" y="10" width="1" height="1" fill="#8a8a9a"/></svg>
<svg style="left:7px;top:7px" width="14" height="13" viewBox="0 0 14 13"><rect x="0" y="0" width="14" height="1" fill="#ff0000"/><rect x="1" y="1" width="12" height="1" fill="#ff0000"/><rect x="1" y="2" width="2" height="1" fill="#ff0000"/><rect x="3" y="2" width="8" height="1" fill="#ffffff"/><rect x="11" y="2" width="2" height="1" fill="#ff0000"/><rect x="2" y="3" width="1" height="1" fill="#ff0000"/><rect x="3" y="3" width="8" height="1" fill="#ffffff"/><rect x="11" y="3" width="1" height="1" fill="#ff0000"/><rect x="2" y="4" width="2" height="1" fill="#ff0000"/><rect x="4" y="4" width="6" height="1" fill="#ffffff"/><rect x="10" y="4" width="2" height="1" fill="#ff0000"/><rect x="3" y="5" width="1" height="1" fill="#ff0000"/><rect x="4" y="5" width="6" height="1" fill="#ffffff"/><rect x="10" y="5" width="1" height="1" fill="#ff0000"/><rect x="3" y="6" width="2" height="1" fill="#ff0000"/><rect x="5" y="6" width="4" height="1" fill="#ffffff"/><rect x="9" y="6" width="2" height="1" fill="#ff0000"/><rect x="4" y="7" width="1" height="1" fill="#ff0000"/><rect x="5" y="7" width="4" height="1" fill="#ffffff"/><rect x="9" y="7" width="1" height="1" fill="#ff0000"/><rect x="4" y="8" width="2" height="1" fill="#ff0000"/><rect x="6" y="8" width="2" height="1" fill="#ffffff"/><rect x="8" y="8" width="2" height="1" fill="#ff0000"/><rect x="5" y="9" width="1" height="1" fill="#ff0000"/><rect x="6" y="9" width="2" height="1" fill="#ffffff"/><rect x="8" y="9" width="1" height="1" fill="#ff0000"/><rect x="5" y="10" width="4" height="1" fill="#ff0000"/><rect x="6" y="11" width="2" height="1" fill="#ff0000"/><rect x="6" y="12" width="2" height="1" fill="#ff0000"/></svg>
<div class="a" style="left:4px;top:67px;width:307px;height:405px;border-top:1px solid #ffffff;border-left:1px solid #ffffff;border-right:1px solid #404040;border-bottom:1px solid #404040;box-shadow:inset -1px -1px #808080;"></div>
<div class="a" style="left:8px;top:71px;width:299px;height:142px;background:#fff;border:1px solid;border-color:#808080 #ffffff #ffffff #808080;box-shadow:inset 1px 1px #404040,inset -1px -1px #d4d0c8;"></div>
<div class="a" style="left:8px;top:217px;width:299px;height:253px;background:#fff;border:1px solid;border-color:#808080 #ffffff #ffffff #808080;box-shadow:inset 1px 1px #404040,inset -1px -1px #d4d0c8;"></div>
<div class="a" style="left:315px;top:67px;width:450px;height:426px;background:#808080;"></div>
<div class="a" style="left:315px;top:111px;width:450px;height:338px;background:#fff;border-left:1px solid #ececec;border-top:1px solid #f4f4f4;"></div>
<div class="a" style="left:315px;top:111px;width:450px;height:336px;overflow:hidden">
<div class="t d" style="left:36.5px;top:14.71px;font-size:9.2px;line-height:9.2px;font-weight:normal;color:#383838;letter-spacing:0px;">computer. The conversion is performed only once. Next time, the book will be opened instantly.</div>
<div class="t d" style="left:36.5px;top:25.71px;font-size:9.2px;line-height:9.2px;font-weight:normal;color:#383838;letter-spacing:0.1px;">(At the first time try to open not very long files:&lt;300kb)</div>
<div class="t d" style="left:22.5px;top:49.87px;font-size:9.6px;line-height:9.6px;font-weight:bold;color:#24508c;letter-spacing:0px;">Mouse buttons</div>
<div class="t d" style="left:36.5px;top:74.71px;font-size:9.2px;line-height:9.2px;font-weight:normal;color:#383838;letter-spacing:0px;">Left button opens the book. The right button shows the context menu.</div>
<div class="t d" style="left:36.5px;top:98.71px;font-size:9.2px;line-height:9.2px;font-weight:normal;color:#383838;letter-spacing:-0.035px;">You can change the book appearance it in the Options dialog (before opening a new file). Each</div>
<div class="t d" style="left:36.5px;top:110.71px;font-size:9.2px;line-height:9.2px;font-weight:normal;color:#383838;letter-spacing:0px;">book can have its own look.</div>
<div class="a" style="left:16px;top:133px;width:407px;height:2px;background:#8ea8bc;"></div>
<div class="a" style="left:16px;top:135px;width:407px;height:16px;background:#ebebeb;"></div>
<div class="t d" style="left:16px;top:136.64px;font-size:14.6px;line-height:14.6px;font-weight:bold;color:#0c2c6c;letter-spacing:0.3px;">Turning pages</div>
<div class="t d" style="left:22.5px;top:166.37px;font-size:9.6px;line-height:9.6px;font-weight:bold;color:#24508c;letter-spacing:0.15px;">Keyboards:</div>
<div class="t d" style="left:36.5px;top:192.01px;font-size:9.2px;line-height:9.2px;font-weight:normal;color:#383838;letter-spacing:0.05px;">next page:</div>
<div class="t d" style="left:36.5px;top:204.71px;font-size:9.2px;line-height:9.2px;font-weight:normal;color:#383838;letter-spacing:0.05px;">previous page:</div>
<div class="t d" style="left:36.5px;top:217.21px;font-size:9.2px;line-height:9.2px;font-weight:normal;color:#383838;letter-spacing:0.05px;">to the begin of the book</div>
<div class="t d" style="left:36.5px;top:229.51px;font-size:9.2px;line-height:9.2px;font-weight:normal;color:#383838;letter-spacing:0.05px;">to the end of the book</div>
<div class="a" style="left:170px;top:189px;width:11px;height:11px;border:1px solid #555;border-radius:2px;background:#fff"></div>
<div class="a" style="left:183px;top:189px;width:10px;height:11px;border:1px solid #555;border-radius:2px;background:#fff"></div>
<div class="a" style="left:197px;top:189px;width:22px;height:11px;border:1px solid #555;border-radius:2px;background:#fff"></div>
<div class="t d" style="left:197px;top:190px;width:22px;text-align:center;font-size:8px;line-height:9px;color:#222">PgDn</div>
<div class="a" style="left:221px;top:189px;width:32px;height:11px;border:1px solid #555;border-radius:2px;background:#fff"></div>
<div class="t d" style="left:221px;top:190px;width:32px;text-align:center;font-size:8px;line-height:9px;color:#222">Space</div>
<div class="a" style="left:170px;top:202px;width:11px;height:11px;border:1px solid #555;border-radius:2px;background:#fff"></div>
<div class="a" style="left:183px;top:202px;width:10px;height:11px;border:1px solid #555;border-radius:2px;background:#fff"></div>
<div class="a" style="left:197px;top:202px;width:22px;height:11px;border:1px solid #555;border-radius:2px;background:#fff"></div>
<div class="t d" style="left:197px;top:203px;width:22px;text-align:center;font-size:8px;line-height:9px;color:#222">PgUp</div>
<svg style="left:170px;top:189px;shape-rendering:auto" width="11" height="11" viewBox="0 0 11 11"><path d="M2 5.5H9M6.5 3L9 5.5 6.5 8" fill="none" stroke="#333" stroke-width="1"/></svg>
<svg style="left:183px;top:189px;shape-rendering:auto" width="11" height="11" viewBox="0 0 11 11"><path d="M5.5 2V9M3 6.5L5.5 9 8 6.5" fill="none" stroke="#333" stroke-width="1"/></svg>
<svg style="left:170px;top:202px;shape-rendering:auto" width="11" height="11" viewBox="0 0 11 11"><path d="M2 5.5H9M4.5 3L2 5.5 4.5 8" fill="none" stroke="#333" stroke-width="1"/></svg>
<svg style="left:183px;top:202px;shape-rendering:auto" width="11" height="11" viewBox="0 0 11 11"><path d="M5.5 2V9M3 4.5L5.5 2 8 4.5" fill="none" stroke="#333" stroke-width="1"/></svg>
<div class="a" style="left:170px;top:215px;width:22px;height:11px;border:1px solid #555;border-radius:2px;background:#fff"></div>
<div class="t d" style="left:170px;top:216px;width:22px;text-align:center;font-size:8px;line-height:9px;color:#222">Home</div>
<div class="a" style="left:170px;top:228px;width:22px;height:11px;border:1px solid #555;border-radius:2px;background:#fff"></div>
<div class="t d" style="left:170px;top:229px;width:22px;text-align:center;font-size:8px;line-height:9px;color:#222">End</div>
<div class="t d" style="left:22.5px;top:255.37px;font-size:9.6px;line-height:9.6px;font-weight:bold;color:#24508c;letter-spacing:0px;">Page number</div>
<div class="t d" style="left:37px;top:280.01px;font-size:9.2px;line-height:9.2px;font-weight:normal;color:#383838;letter-spacing:-0.03px;">If you click on a page number or on the signs</div>
<svg style="left:224px;top:279px;shape-rendering:auto" width="5" height="8" viewBox="0 0 5 8"><path d="M0.3 4L4.8 0.2V7.8Z" fill="#444"/></svg>
<div class="t d" style="left:234.60000000000002px;top:280.01px;font-size:9.2px;line-height:9.2px;font-weight:normal;color:#383838;letter-spacing:0px;">,</div>
<svg style="left:242px;top:279px;shape-rendering:auto" width="5" height="8" viewBox="0 0 5 8"><path d="M4.7 4L0.2 0.2V7.8Z" fill="#444"/></svg>
<div class="t d" style="left:248.5px;top:280.01px;font-size:9.2px;line-height:9.2px;font-weight:normal;color:#383838;letter-spacing:0px;">you will go to the next or previous page.</div>
<div class="t d" style="left:22.5px;top:303.77px;font-size:9.6px;line-height:9.6px;font-weight:bold;color:#24508c;letter-spacing:0.12px;">Page navigator bar</div>
<div class="t d" style="left:37px;top:329.71px;font-size:9.2px;line-height:9.2px;font-weight:normal;color:#383838;letter-spacing:-0.04px;">Use the page navigator bar to go to any page by number. The page navigator bar annears as a</div>
<div class="a" style="left:2px;top:2px;width:446px;height:13px;background:linear-gradient(to right,#0a246a 0px,#a6caf0 400px);"></div>
<svg style="left:4px;top:3px" width="11" height="11" viewBox="0 0 11 11"><rect x="2" y="0" width="1" height="1" fill="#303040"/><rect x="3" y="0" width="6" height="1" fill="#f4f4f0"/><rect x="9" y="0" width="1" height="1" fill="#303040"/><rect x="2" y="1" width="8" height="1" fill="#f4f4f0"/><rect x="10" y="1" width="1" height="1" fill="#303040"/><rect x="2" y="2" width="1" height="1" fill="#f4f4f0"/><rect x="3" y="2" width="1" height="1" fill="#80a8e0"/><rect x="4" y="2" width="1" height="1" fill="#2a6ae0"/><rect x="5" y="2" width="1" height="1" fill="#80a8e0"/><rect x="6" y="2" width="4" height="1" fill="#f4f4f0"/><rect x="10" y="2" width="1" height="1" fill="#303040"/><rect x="1" y="3" width="1" height="1" fill="#80a8e0"/><rect x="2" y="3" width="4" height="1" fill="#2a6ae0"/><rect x="6" y="3" width="1" height="1" fill="#80a8e0"/><rect x="7" y="3" width="3" height="1" fill="#f4f4f0"/><rect x="10" y="3" width="1" height="1" fill="#303040"/><rect x="0" y="4" width="2" height="1" fill="#80a8e0"/><rect x="2" y="4" width="1" height="1" fill="#2a6ae0"/><rect x="3" y="4" width="1" height="1" fill="#80a8e0"/><rect x="4" y="4" width="1" height="1" fill="#f4f4f0"/><rect x="5" y="4" width="2" height="1" fill="#2a6ae0"/><rect x="7" y="4" width="3" height="1" fill="#f4f4f0"/><rect x="10" y="4" width="1" height="1" fill="#303040"/><rect x="1" y="5" width="2" height="1" fill="#2a6ae0"/><rect x="3" y="5" width="1" height="1" fill="#80a8e0"/><rect x="4" y="5" width="2" height="1" fill="#2a6ae0"/><rect x="6" y="5" width="1" height="1" fill="#80a8e0"/><rect x="7" y="5" width="3" height="1" fill="#f4f4f0"/><rect x="10" y="5" width="1" height="1" fill="#303040"/><rect x="2" y="6" width="1" height="1" fill="#80a8e0"/><rect x="3" y="6" width="2" height="1" fill="#2a6ae0"/><rect x="5" y="6" width="1" height="1" fill="#80a8e0"/><rect x="6" y="6" width="4" height="1" fill="#f4f4f0"/><rect x="10" y="6" width="1" height="1" fill="#303040"/><rect x="2" y="7" width="1" height="1" fill="#f4f4f0"/><rect x="3" y="7" width="1" height="1" fill="#80a8e0"/><rect x="4" y="7" width="1" height="1" fill="#2a6ae0"/><rect x="5" y="7" width="5" height="1" fill="#f4f4f0"/><rect x="10" y="7" width="1" height="1" fill="#303040"/><rect x="2" y="8" width="8" height="1" fill="#f4f4f0"/><rect x="10" y="8" width="1" height="1" fill="#303040"/><rect x="2" y="9" width="8" height="1" fill="#f4f4f0"/><rect x="10" y="9" width="1" height="1" fill="#303040"/><rect x="3" y="10" width="8" height="1" fill="#303040"/></svg>
<div class="a" style="left:435px;top:3px;width:11px;height:10px;background:#d4d0c8;border:1px solid;border-color:#ffffff #404040 #404040 #ffffff;box-shadow:inset -1px -1px #808080;"><svg style="left:2px;top:2px;shape-rendering:auto" width="6" height="5" viewBox="0 0 6 5"><path d="M0.5 0.5L5.5 4.5M5.5 0.5L0.5 4.5" stroke="#222" stroke-width="1.3"/></svg></div>
<div class="a" style="left:448px;top:0px;width:1px;height:337px;background:#a0a0a0;"></div>
<div class="a" style="left:449px;top:0px;width:1px;height:337px;background:#404040;"></div>
<div class="a" style="left:437px;top:16px;width:11px;height:320px;background:#ece9e4;"></div>
<div class="a" style="left:437px;top:16px;width:11px;height:11px;background:#d4d0c8;border:1px solid;border-color:#e4e2dc #505050 #505050 #e4e2dc;"></div>
<svg style="left:440px;top:20px" width="5" height="3" viewBox="0 0 5 3"><rect x="2" y="0" width="1" height="1" fill="#000000"/><rect x="1" y="1" width="3" height="1" fill="#000000"/><rect x="0" y="2" width="5" height="1" fill="#000000"/></svg>
<div class="a" style="left:437px;top:51px;width:11px;height:80px;background:#d8d5ce;border:1px solid;border-color:#e4e2dc #505050 #505050 #e4e2dc;"></div>
<div class="a" style="left:437px;top:325px;width:11px;height:11px;background:#d4d0c8;border:1px solid;border-color:#e4e2dc #505050 #505050 #e4e2dc;"></div>
<svg style="left:440px;top:328px" width="5" height="3" viewBox="0 0 5 3"><rect x="0" y="0" width="5" height="1" fill="#000000"/><rect x="1" y="1" width="3" height="1" fill="#000000"/><rect x="2" y="2" width="1" height="1" fill="#000000"/></svg>
</div>
<div class="a" style="left:315px;top:447px;width:450px;height:1px;background:#d8d8d8;"></div>
<div class="a" style="left:315px;top:448px;width:450px;height:1px;background:#505050;"></div>
<div class="a" style="left:4px;top:495px;width:343px;height:19px;border:1px solid;border-color:#808080 #ffffff #ffffff #808080;"></div>
<div class="a" style="left:349px;top:495px;width:38px;height:19px;border:1px solid;border-color:#808080 #ffffff #ffffff #808080;"></div>
<div class="a" style="left:389px;top:495px;width:72px;height:19px;border:1px solid;border-color:#808080 #ffffff #ffffff #808080;"></div>
<div class="a" style="left:463px;top:495px;width:108px;height:19px;border:1px solid;border-color:#808080 #ffffff #ffffff #808080;"></div>
<div class="a" style="left:573px;top:495px;width:192px;height:19px;border:1px solid;border-color:#808080 #ffffff #ffffff #808080;"></div>
<div class="a" style="left:10px;top:73px;width:279px;height:138px;overflow:hidden">
<div class="a" style="left:8px;top:0px;width:1px;height:138px;background:repeating-linear-gradient(to bottom,#808080 0 1px,transparent 1px 2px)"></div><div class="a" style="left:27px;top:0px;width:1px;height:138px;background:repeating-linear-gradient(to bottom,#808080 0 1px,transparent 1px 2px)"></div><div class="a" style="left:46px;top:0px;width:1px;height:138px;background:repeating-linear-gradient(to bottom,#808080 0 1px,transparent 1px 2px)"></div><div class="a" style="left:65px;top:0px;width:1px;height:138px;background:repeating-linear-gradient(to bottom,#808080 0 1px,transparent 1px 2px)"></div><div class="a" style="left:84px;top:16px;width:1px;height:122px;background:repeating-linear-gradient(to bottom,#808080 0 1px,transparent 1px 2px)"></div><div class="a" style="left:103px;top:48px;width:1px;height:73px;background:repeating-linear-gradient(to bottom,#808080 0 1px,transparent 1px 2px)"></div><div class="a" style="left:67px;top:8px;width:9px;height:1px;background:repeating-linear-gradient(to right,#808080 0 1px,transparent 1px 2px)"></div><div class="a" style="left:61px;top:4px;width:9px;height:9px;border:1px solid #808080;background:#fff"></div><div class="a" style="left:63px;top:8px;width:5px;height:1px;background:#000"></div><svg style="left:75px;top:0px" width="17" height="14" viewBox="0 0 17 14"><rect x="3" y="1" width="6" height="1" fill="#808000"/><rect x="2" y="2" width="1" height="1" fill="#808000"/><rect x="3" y="2" width="1" height="1" fill="#f4ec8c"/><rect x="4" y="2" width="1" height="1" fill="#ffffff"/><rect x="5" y="2" width="4" height="1" fill="#f4ec8c"/><rect x="9" y="2" width="1" height="1" fill="#000000"/><rect x="1" y="3" width="1" height="1" fill="#808000"/><rect x="2" y="3" width="8" height="1" fill="#f4ec8c"/><rect x="10" y="3" width="6" height="1" fill="#808000"/><rect x="1" y="4" width="1" height="1" fill="#808000"/><rect x="2" y="4" width="1" height="1" fill="#ffffff"/><rect x="3" y="4" width="2" height="1" fill="#f4ec8c"/><rect x="5" y="4" width="1" height="1" fill="#ffffff"/><rect x="6" y="4" width="8" height="1" fill="#f4ec8c"/><rect x="14" y="4" width="1" height="1" fill="#808000"/><rect x="15" y="4" width="1" height="1" fill="#000000"/><rect x="1" y="5" width="1" height="1" fill="#808000"/><rect x="2" y="5" width="5" height="1" fill="#f4ec8c"/><rect x="7" y="5" width="1" height="1" fill="#ffffff"/><rect x="8" y="5" width="3" height="1" fill="#f4ec8c"/><rect x="11" y="5" width="1" height="1" fill="#ffffff"/><rect x="12" y="5" width="2" height="1" fill="#f4ec8c"/><rect x="14" y="5" width="1" height="1" fill="#808000"/><rect x="15" y="5" width="1" height="1" fill="#000000"/><rect x="1" y="6" width="1" height="1" fill="#808000"/><rect x="2" y="6" width="1" height="1" fill="#ffffff"/><rect x="3" y="6" width="2" height="1" fill="#f4ec8c"/><rect x="5" y="6" width="1" height="1" fill="#ffffff"/><rect x="6" y="6" width="8" height="1" fill="#f4ec8c"/><rect x="14" y="6" width="1" height="1" fill="#808000"/><rect x="15" y="6" width="1" height="1" fill="#000000"/><rect x="1" y="7" width="1" height="1" fill="#808000"/><rect x="2" y="7" width="6" height="1" fill="#f4ec8c"/><rect x="8" y="7" width="1" height="1" fill="#ffffff"/><rect x="9" y="7" width="4" height="1" fill="#f4ec8c"/><rect x="13" y="7" width="1" height="1" fill="#ffffff"/><rect x="14" y="7" width="1" height="1" fill="#808000"/><rect x="15" y="7" width="1" height="1" fill="#000000"/><rect x="1" y="8" width="1" height="1" fill="#808000"/><rect x="2" y="8" width="1" height="1" fill="#ffffff"/><rect x="3" y="8" width="1" height="1" fill="#f4ec8c"/><rect x="4" y="8" width="1" height="1" fill="#ffffff"/><rect x="5" y="8" width="6" height="1" fill="#f4ec8c"/><rect x="11" y="8" width="1" height="1" fill="#ffffff"/><rect x="12" y="8" width="2" height="1" fill="#f4ec8c"/><rect x="14" y="8" width="1" height="1" fill="#808000"/><rect x="15" y="8" width="1" height="1" fill="#000000"/><rect x="1" y="9" width="1" height="1" fill="#808000"/><rect x="2" y="9" width="4" height="1" fill="#f4ec8c"/><rect x="6" y="9" width="1" height="1" fill="#ffffff"/><rect x="7" y="9" width="2" height="1" fill="#f4ec8c"/><rect x="9" y="9" width="1" height="1" fill="#ffffff"/><rect x="10" y="9" width="4" height="1" fill="#f4ec8c"/><rect x="14" y="9" width="1" height="1" fill="#808000"/><rect x="15" y="9" width="1" height="1" fill="#000000"/><rect x="1" y="10" width="1" height="1" fill="#808000"/><rect x="2" y="10" width="1" height="1" fill="#ffffff"/><rect x="3" y="10" width="10" height="1" fill="#f4ec8c"/><rect x="13" y="10" width="1" height="1" fill="#ffffff"/><rect x="14" y="10" width="1" height="1" fill="#808000"/><rect x="15" y="10" width="1" height="1" fill="#000000"/><rect x="1" y="11" width="1" height="1" fill="#808000"/><rect x="2" y="11" width="2" height="1" fill="#f4ec8c"/><rect x="4" y="11" width="1" height="1" fill="#ffffff"/><rect x="5" y="11" width="2" height="1" fill="#f4ec8c"/><rect x="7" y="11" width="1" height="1" fill="#ffffff"/><rect x="8" y="11" width="2" height="1" fill="#f4ec8c"/><rect x="10" y="11" width="1" height="1" fill="#ffffff"/><rect x="11" y="11" width="3" height="1" fill="#f4ec8c"/><rect x="14" y="11" width="1" height="1" fill="#808000"/><rect x="15" y="11" width="1" height="1" fill="#000000"/><rect x="1" y="12" width="14" height="1" fill="#808000"/><rect x="15" y="12" width="1" height="1" fill="#b8b048"/><rect x="16" y="12" width="1" height="1" fill="#000000"/><rect x="2" y="13" width="15" height="1" fill="#000000"/></svg><div class="t" style="left:97px;top:2px;letter-spacing:-0.1px;">Administrator</div><div class="a" style="left:86px;top:24px;width:9px;height:1px;background:repeating-linear-gradient(to right,#808080 0 1px,transparent 1px 2px)"></div><svg style="left:94px;top:16px" width="17" height="14" viewBox="0 0 17 14"><rect x="3" y="1" width="6" height="1" fill="#808000"/><rect x="2" y="2" width="1" height="1" fill="#808000"/><rect x="3" y="2" width="1" height="1" fill="#f4ec8c"/><rect x="4" y="2" width="1" height="1" fill="#ffffff"/><rect x="5" y="2" width="4" height="1" fill="#f4ec8c"/><rect x="9" y="2" width="1" height="1" fill="#000000"/><rect x="1" y="3" width="1" height="1" fill="#808000"/><rect x="2" y="3" width="8" height="1" fill="#f4ec8c"/><rect x="10" y="3" width="6" height="1" fill="#808000"/><rect x="1" y="4" width="1" height="1" fill="#808000"/><rect x="2" y="4" width="1" height="1" fill="#ffffff"/><rect x="3" y="4" width="2" height="1" fill="#f4ec8c"/><rect x="5" y="4" width="1" height="1" fill="#ffffff"/><rect x="6" y="4" width="8" height="1" fill="#f4ec8c"/><rect x="14" y="4" width="1" height="1" fill="#808000"/><rect x="15" y="4" width="1" height="1" fill="#000000"/><rect x="1" y="5" width="1" height="1" fill="#808000"/><rect x="2" y="5" width="5" height="1" fill="#f4ec8c"/><rect x="7" y="5" width="1" height="1" fill="#ffffff"/><rect x="8" y="5" width="3" height="1" fill="#f4ec8c"/><rect x="11" y="5" width="1" height="1" fill="#ffffff"/><rect x="12" y="5" width="2" height="1" fill="#f4ec8c"/><rect x="14" y="5" width="1" height="1" fill="#808000"/><rect x="15" y="5" width="1" height="1" fill="#000000"/><rect x="1" y="6" width="1" height="1" fill="#808000"/><rect x="2" y="6" width="1" height="1" fill="#ffffff"/><rect x="3" y="6" width="2" height="1" fill="#f4ec8c"/><rect x="5" y="6" width="1" height="1" fill="#ffffff"/><rect x="6" y="6" width="8" height="1" fill="#f4ec8c"/><rect x="14" y="6" width="1" height="1" fill="#808000"/><rect x="15" y="6" width="1" height="1" fill="#000000"/><rect x="1" y="7" width="1" height="1" fill="#808000"/><rect x="2" y="7" width="6" height="1" fill="#f4ec8c"/><rect x="8" y="7" width="1" height="1" fill="#ffffff"/><rect x="9" y="7" width="4" height="1" fill="#f4ec8c"/><rect x="13" y="7" width="1" height="1" fill="#ffffff"/><rect x="14" y="7" width="1" height="1" fill="#808000"/><rect x="15" y="7" width="1" height="1" fill="#000000"/><rect x="1" y="8" width="1" height="1" fill="#808000"/><rect x="2" y="8" width="1" height="1" fill="#ffffff"/><rect x="3" y="8" width="1" height="1" fill="#f4ec8c"/><rect x="4" y="8" width="1" height="1" fill="#ffffff"/><rect x="5" y="8" width="6" height="1" fill="#f4ec8c"/><rect x="11" y="8" width="1" height="1" fill="#ffffff"/><rect x="12" y="8" width="2" height="1" fill="#f4ec8c"/><rect x="14" y="8" width="1" height="1" fill="#808000"/><rect x="15" y="8" width="1" height="1" fill="#000000"/><rect x="1" y="9" width="1" height="1" fill="#808000"/><rect x="2" y="9" width="4" height="1" fill="#f4ec8c"/><rect x="6" y="9" width="1" height="1" fill="#ffffff"/><rect x="7" y="9" width="2" height="1" fill="#f4ec8c"/><rect x="9" y="9" width="1" height="1" fill="#ffffff"/><rect x="10" y="9" width="4" height="1" fill="#f4ec8c"/><rect x="14" y="9" width="1" height="1" fill="#808000"/><rect x="15" y="9" width="1" height="1" fill="#000000"/><rect x="1" y="10" width="1" height="1" fill="#808000"/><rect x="2" y="10" width="1" height="1" fill="#ffffff"/><rect x="3" y="10" width="10" height="1" fill="#f4ec8c"/><rect x="13" y="10" width="1" height="1" fill="#ffffff"/><rect x="14" y="10" width="1" height="1" fill="#808000"/><rect x="15" y="10" width="1" height="1" fill="#000000"/><rect x="1" y="11" width="1" height="1" fill="#808000"/><rect x="2" y="11" width="2" height="1" fill="#f4ec8c"/><rect x="4" y="11" width="1" height="1" fill="#ffffff"/><rect x="5" y="11" width="2" height="1" fill="#f4ec8c"/><rect x="7" y="11" width="1" height="1" fill="#ffffff"/><rect x="8" y="11" width="2" height="1" fill="#f4ec8c"/><rect x="10" y="11" width="1" height="1" fill="#ffffff"/><rect x="11" y="11" width="3" height="1" fill="#f4ec8c"/><rect x="14" y="11" width="1" height="1" fill="#808000"/><rect x="15" y="11" width="1" height="1" fill="#000000"/><rect x="1" y="12" width="14" height="1" fill="#808000"/><rect x="15" y="12" width="1" height="1" fill="#b8b048"/><rect x="16" y="12" width="1" height="1" fill="#000000"/><rect x="2" y="13" width="15" height="1" fill="#000000"/></svg><div class="t" style="left:116px;top:18px;letter-spacing:-0.1px;">Cookies</div><div class="a" style="left:86px;top:40px;width:9px;height:1px;background:repeating-linear-gradient(to right,#808080 0 1px,transparent 1px 2px)"></div><div class="a" style="left:80px;top:36px;width:9px;height:9px;border:1px solid #808080;background:#fff"></div><div class="a" style="left:82px;top:40px;width:5px;height:1px;background:#000"></div><svg style="left:94px;top:32px" width="17" height="14" viewBox="0 0 17 14"><rect x="3" y="1" width="6" height="1" fill="#808000"/><rect x="2" y="2" width="1" height="1" fill="#808000"/><rect x="3" y="2" width="1" height="1" fill="#f4ec8c"/><rect x="4" y="2" width="1" height="1" fill="#ffffff"/><rect x="5" y="2" width="4" height="1" fill="#f4ec8c"/><rect x="9" y="2" width="1" height="1" fill="#000000"/><rect x="1" y="3" width="1" height="1" fill="#808000"/><rect x="2" y="3" width="8" height="1" fill="#f4ec8c"/><rect x="10" y="3" width="6" height="1" fill="#808000"/><rect x="1" y="4" width="1" height="1" fill="#808000"/><rect x="2" y="4" width="1" height="1" fill="#ffffff"/><rect x="3" y="4" width="2" height="1" fill="#f4ec8c"/><rect x="5" y="4" width="1" height="1" fill="#ffffff"/><rect x="6" y="4" width="8" height="1" fill="#f4ec8c"/><rect x="14" y="4" width="1" height="1" fill="#808000"/><rect x="15" y="4" width="1" height="1" fill="#000000"/><rect x="1" y="5" width="1" height="1" fill="#808000"/><rect x="2" y="5" width="5" height="1" fill="#f4ec8c"/><rect x="7" y="5" width="1" height="1" fill="#ffffff"/><rect x="8" y="5" width="3" height="1" fill="#f4ec8c"/><rect x="11" y="5" width="1" height="1" fill="#ffffff"/><rect x="12" y="5" width="2" height="1" fill="#f4ec8c"/><rect x="14" y="5" width="1" height="1" fill="#808000"/><rect x="15" y="5" width="1" height="1" fill="#000000"/><rect x="1" y="6" width="1" height="1" fill="#808000"/><rect x="2" y="6" width="1" height="1" fill="#ffffff"/><rect x="3" y="6" width="2" height="1" fill="#f4ec8c"/><rect x="5" y="6" width="1" height="1" fill="#ffffff"/><rect x="6" y="6" width="8" height="1" fill="#f4ec8c"/><rect x="14" y="6" width="1" height="1" fill="#808000"/><rect x="15" y="6" width="1" height="1" fill="#000000"/><rect x="1" y="7" width="1" height="1" fill="#808000"/><rect x="2" y="7" width="6" height="1" fill="#f4ec8c"/><rect x="8" y="7" width="1" height="1" fill="#ffffff"/><rect x="9" y="7" width="4" height="1" fill="#f4ec8c"/><rect x="13" y="7" width="1" height="1" fill="#ffffff"/><rect x="14" y="7" width="1" height="1" fill="#808000"/><rect x="15" y="7" width="1" height="1" fill="#000000"/><rect x="1" y="8" width="1" height="1" fill="#808000"/><rect x="2" y="8" width="1" height="1" fill="#ffffff"/><rect x="3" y="8" width="1" height="1" fill="#f4ec8c"/><rect x="4" y="8" width="1" height="1" fill="#ffffff"/><rect x="5" y="8" width="6" height="1" fill="#f4ec8c"/><rect x="11" y="8" width="1" height="1" fill="#ffffff"/><rect x="12" y="8" width="2" height="1" fill="#f4ec8c"/><rect x="14" y="8" width="1" height="1" fill="#808000"/><rect x="15" y="8" width="1" height="1" fill="#000000"/><rect x="1" y="9" width="1" height="1" fill="#808000"/><rect x="2" y="9" width="4" height="1" fill="#f4ec8c"/><rect x="6" y="9" width="1" height="1" fill="#ffffff"/><rect x="7" y="9" width="2" height="1" fill="#f4ec8c"/><rect x="9" y="9" width="1" height="1" fill="#ffffff"/><rect x="10" y="9" width="4" height="1" fill="#f4ec8c"/><rect x="14" y="9" width="1" height="1" fill="#808000"/><rect x="15" y="9" width="1" height="1" fill="#000000"/><rect x="1" y="10" width="1" height="1" fill="#808000"/><rect x="2" y="10" width="1" height="1" fill="#ffffff"/><rect x="3" y="10" width="10" height="1" fill="#f4ec8c"/><rect x="13" y="10" width="1" height="1" fill="#ffffff"/><rect x="14" y="10" width="1" height="1" fill="#808000"/><rect x="15" y="10" width="1" height="1" fill="#000000"/><rect x="1" y="11" width="1" height="1" fill="#808000"/><rect x="2" y="11" width="2" height="1" fill="#f4ec8c"/><rect x="4" y="11" width="1" height="1" fill="#ffffff"/><rect x="5" y="11" width="2" height="1" fill="#f4ec8c"/><rect x="7" y="11" width="1" height="1" fill="#ffffff"/><rect x="8" y="11" width="2" height="1" fill="#f4ec8c"/><rect x="10" y="11" width="1" height="1" fill="#ffffff"/><rect x="11" y="11" width="3" height="1" fill="#f4ec8c"/><rect x="14" y="11" width="1" height="1" fill="#808000"/><rect x="15" y="11" width="1" height="1" fill="#000000"/><rect x="1" y="12" width="14" height="1" fill="#808000"/><rect x="15" y="12" width="1" height="1" fill="#b8b048"/><rect x="16" y="12" width="1" height="1" fill="#000000"/><rect x="2" y="13" width="15" height="1" fill="#000000"/></svg><div class="t" style="left:116px;top:34px;letter-spacing:-0.1px;">Desktop</div><div class="a" style="left:105px;top:56px;width:9px;height:1px;background:repeating-linear-gradient(to right,#808080 0 1px,transparent 1px 2px)"></div><svg style="left:113px;top:48px" width="17" height="14" viewBox="0 0 17 14"><rect x="3" y="1" width="6" height="1" fill="#808000"/><rect x="2" y="2" width="1" height="1" fill="#808000"/><rect x="3" y="2" width="1" height="1" fill="#f4ec8c"/><rect x="4" y="2" width="1" height="1" fill="#ffffff"/><rect x="5" y="2" width="4" height="1" fill="#f4ec8c"/><rect x="9" y="2" width="1" height="1" fill="#000000"/><rect x="1" y="3" width="1" height="1" fill="#808000"/><rect x="2" y="3" width="8" height="1" fill="#f4ec8c"/><rect x="10" y="3" width="6" height="1" fill="#808000"/><rect x="1" y="4" width="1" height="1" fill="#808000"/><rect x="2" y="4" width="1" height="1" fill="#ffffff"/><rect x="3" y="4" width="2" height="1" fill="#f4ec8c"/><rect x="5" y="4" width="1" height="1" fill="#ffffff"/><rect x="6" y="4" width="8" height="1" fill="#f4ec8c"/><rect x="14" y="4" width="1" height="1" fill="#808000"/><rect x="15" y="4" width="1" height="1" fill="#000000"/><rect x="1" y="5" width="1" height="1" fill="#808000"/><rect x="2" y="5" width="5" height="1" fill="#f4ec8c"/><rect x="7" y="5" width="1" height="1" fill="#ffffff"/><rect x="8" y="5" width="3" height="1" fill="#f4ec8c"/><rect x="11" y="5" width="1" height="1" fill="#ffffff"/><rect x="12" y="5" width="2" height="1" fill="#f4ec8c"/><rect x="14" y="5" width="1" height="1" fill="#808000"/><rect x="15" y="5" width="1" height="1" fill="#000000"/><rect x="1" y="6" width="1" height="1" fill="#808000"/><rect x="2" y="6" width="1" height="1" fill="#ffffff"/><rect x="3" y="6" width="2" height="1" fill="#f4ec8c"/><rect x="5" y="6" width="1" height="1" fill="#ffffff"/><rect x="6" y="6" width="8" height="1" fill="#f4ec8c"/><rect x="14" y="6" width="1" height="1" fill="#808000"/><rect x="15" y="6" width="1" height="1" fill="#000000"/><rect x="1" y="7" width="1" height="1" fill="#808000"/><rect x="2" y="7" width="6" height="1" fill="#f4ec8c"/><rect x="8" y="7" width="1" height="1" fill="#ffffff"/><rect x="9" y="7" width="4" height="1" fill="#f4ec8c"/><rect x="13" y="7" width="1" height="1" fill="#ffffff"/><rect x="14" y="7" width="1" height="1" fill="#808000"/><rect x="15" y="7" width="1" height="1" fill="#000000"/><rect x="1" y="8" width="1" height="1" fill="#808000"/><rect x="2" y="8" width="1" height="1" fill="#ffffff"/><rect x="3" y="8" width="1" height="1" fill="#f4ec8c"/><rect x="4" y="8" width="1" height="1" fill="#ffffff"/><rect x="5" y="8" width="6" height="1" fill="#f4ec8c"/><rect x="11" y="8" width="1" height="1" fill="#ffffff"/><rect x="12" y="8" width="2" height="1" fill="#f4ec8c"/><rect x="14" y="8" width="1" height="1" fill="#808000"/><rect x="15" y="8" width="1" height="1" fill="#000000"/><rect x="1" y="9" width="1" height="1" fill="#808000"/><rect x="2" y="9" width="4" height="1" fill="#f4ec8c"/><rect x="6" y="9" width="1" height="1" fill="#ffffff"/><rect x="7" y="9" width="2" height="1" fill="#f4ec8c"/><rect x="9" y="9" width="1" height="1" fill="#ffffff"/><rect x="10" y="9" width="4" height="1" fill="#f4ec8c"/><rect x="14" y="9" width="1" height="1" fill="#808000"/><rect x="15" y="9" width="1" height="1" fill="#000000"/><rect x="1" y="10" width="1" height="1" fill="#808000"/><rect x="2" y="10" width="1" height="1" fill="#ffffff"/><rect x="3" y="10" width="10" height="1" fill="#f4ec8c"/><rect x="13" y="10" width="1" height="1" fill="#ffffff"/><rect x="14" y="10" width="1" height="1" fill="#808000"/><rect x="15" y="10" width="1" height="1" fill="#000000"/><rect x="1" y="11" width="1" height="1" fill="#808000"/><rect x="2" y="11" width="2" height="1" fill="#f4ec8c"/><rect x="4" y="11" width="1" height="1" fill="#ffffff"/><rect x="5" y="11" width="2" height="1" fill="#f4ec8c"/><rect x="7" y="11" width="1" height="1" fill="#ffffff"/><rect x="8" y="11" width="2" height="1" fill="#f4ec8c"/><rect x="10" y="11" width="1" height="1" fill="#ffffff"/><rect x="11" y="11" width="3" height="1" fill="#f4ec8c"/><rect x="14" y="11" width="1" height="1" fill="#808000"/><rect x="15" y="11" width="1" height="1" fill="#000000"/><rect x="1" y="12" width="14" height="1" fill="#808000"/><rect x="15" y="12" width="1" height="1" fill="#b8b048"/><rect x="16" y="12" width="1" height="1" fill="#000000"/><rect x="2" y="13" width="15" height="1" fill="#000000"/></svg><div class="t" style="left:135px;top:50px;letter-spacing:-0.1px;">A_V_free</div><div class="a" style="left:105px;top:72px;width:9px;height:1px;background:repeating-linear-gradient(to right,#808080 0 1px,transparent 1px 2px)"></div><svg style="left:113px;top:64px" width="17" height="14" viewBox="0 0 17 14"><rect x="4" y="1" width="5" height="1" fill="#808000"/><rect x="3" y="2" width="1" height="1" fill="#808000"/><rect x="4" y="2" width="1" height="1" fill="#f4ec8c"/><rect x="5" y="2" width="1" height="1" fill="#ffffff"/><rect x="6" y="2" width="1" height="1" fill="#f4ec8c"/><rect x="7" y="2" width="1" height="1" fill="#ffffff"/><rect x="8" y="2" width="1" height="1" fill="#f4ec8c"/><rect x="9" y="2" width="1" height="1" fill="#808000"/><rect x="2" y="3" width="1" height="1" fill="#808000"/><rect x="3" y="3" width="1" height="1" fill="#f4ec8c"/><rect x="4" y="3" width="1" height="1" fill="#ffffff"/><rect x="5" y="3" width="1" height="1" fill="#f4ec8c"/><rect x="6" y="3" width="1" height="1" fill="#ffffff"/><rect x="7" y="3" width="1" height="1" fill="#f4ec8c"/><rect x="8" y="3" width="1" height="1" fill="#ffffff"/><rect x="9" y="3" width="1" height="1" fill="#f4ec8c"/><rect x="10" y="3" width="6" height="1" fill="#808000"/><rect x="2" y="4" width="1" height="1" fill="#808000"/><rect x="3" y="4" width="12" height="1" fill="#f4ec8c"/><rect x="15" y="4" width="1" height="1" fill="#808000"/><rect x="16" y="4" width="1" height="1" fill="#000000"/><rect x="2" y="5" width="1" height="1" fill="#808000"/><rect x="3" y="5" width="1" height="1" fill="#f4ec8c"/><rect x="4" y="5" width="1" height="1" fill="#ffffff"/><rect x="5" y="5" width="1" height="1" fill="#f4ec8c"/><rect x="6" y="5" width="1" height="1" fill="#ffffff"/><rect x="7" y="5" width="1" height="1" fill="#f4ec8c"/><rect x="8" y="5" width="1" height="1" fill="#ffffff"/><rect x="9" y="5" width="1" height="1" fill="#f4ec8c"/><rect x="10" y="5" width="1" height="1" fill="#ffffff"/><rect x="11" y="5" width="1" height="1" fill="#f4ec8c"/><rect x="12" y="5" width="1" height="1" fill="#ffffff"/><rect x="13" y="5" width="2" height="1" fill="#f4ec8c"/><rect x="15" y="5" width="1" height="1" fill="#808000"/><rect x="16" y="5" width="1" height="1" fill="#000000"/><rect x="1" y="6" width="12" height="1" fill="#808000"/><rect x="13" y="6" width="1" height="1" fill="#ffffff"/><rect x="14" y="6" width="1" height="1" fill="#f4ec8c"/><rect x="15" y="6" width="1" height="1" fill="#808000"/><rect x="16" y="6" width="1" height="1" fill="#000000"/><rect x="1" y="7" width="1" height="1" fill="#808000"/><rect x="2" y="7" width="10" height="1" fill="#f4ec8c"/><rect x="12" y="7" width="1" height="1" fill="#000000"/><rect x="13" y="7" width="2" height="1" fill="#f4ec8c"/><rect x="15" y="7" width="1" height="1" fill="#808000"/><rect x="16" y="7" width="1" height="1" fill="#000000"/><rect x="1" y="8" width="1" height="1" fill="#808000"/><rect x="2" y="8" width="1" height="1" fill="#ffffff"/><rect x="3" y="8" width="1" height="1" fill="#f4ec8c"/><rect x="4" y="8" width="1" height="1" fill="#ffffff"/><rect x="5" y="8" width="1" height="1" fill="#f4ec8c"/><rect x="6" y="8" width="1" height="1" fill="#ffffff"/><rect x="7" y="8" width="1" height="1" fill="#f4ec8c"/><rect x="8" y="8" width="1" height="1" fill="#ffffff"/><rect x="9" y="8" width="1" height="1" fill="#f4ec8c"/><rect x="10" y="8" width="1" height="1" fill="#ffffff"/><rect x="11" y="8" width="1" height="1" fill="#f4ec8c"/><rect x="12" y="8" width="1" height="1" fill="#000000"/><rect x="13" y="8" width="1" height="1" fill="#ffffff"/><rect x="14" y="8" width="1" height="1" fill="#f4ec8c"/><rect x="15" y="8" width="1" height="1" fill="#808000"/><rect x="16" y="8" width="1" height="1" fill="#000000"/><rect x="1" y="9" width="1" height="1" fill="#808000"/><rect x="2" y="9" width="11" height="1" fill="#f4ec8c"/><rect x="13" y="9" width="1" height="1" fill="#000000"/><rect x="14" y="9" width="1" height="1" fill="#f4ec8c"/><rect x="15" y="9" width="1" height="1" fill="#808000"/><rect x="16" y="9" width="1" height="1" fill="#000000"/><rect x="1" y="10" width="1" height="1" fill="#808000"/><rect x="2" y="10" width="1" height="1" fill="#ffffff"/><rect x="3" y="10" width="1" height="1" fill="#f4ec8c"/><rect x="4" y="10" width="1" height="1" fill="#ffffff"/><rect x="5" y="10" width="1" height="1" fill="#f4ec8c"/><rect x="6" y="10" width="1" height="1" fill="#ffffff"/><rect x="7" y="10" width="1" height="1" fill="#f4ec8c"/><rect x="8" y="10" width="1" height="1" fill="#ffffff"/><rect x="9" y="10" width="1" height="1" fill="#f4ec8c"/><rect x="10" y="10" width="1" height="1" fill="#ffffff"/><rect x="11" y="10" width="1" height="1" fill="#f4ec8c"/><rect x="12" y="10" width="1" height="1" fill="#ffffff"/><rect x="13" y="10" width="1" height="1" fill="#000000"/><rect x="14" y="10" width="1" height="1" fill="#f4ec8c"/><rect x="15" y="10" width="1" height="1" fill="#808000"/><rect x="16" y="10" width="1" height="1" fill="#000000"/><rect x="2" y="11" width="1" height="1" fill="#808000"/><rect x="3" y="11" width="12" height="1" fill="#f4ec8c"/><rect x="15" y="11" width="1" height="1" fill="#808000"/><rect x="16" y="11" width="1" height="1" fill="#000000"/><rect x="3" y="12" width="12" height="1" fill="#808000"/><rect x="15" y="12" width="1" height="1" fill="#b8b048"/><rect x="16" y="12" width="1" height="1" fill="#000000"/><rect x="4" y="13" width="13" height="1" fill="#000000"/></svg><div class="a" style="left:133px;top:64px;width:50px;height:16px;background:#d4d0c8"></div><div class="t" style="left:135px;top:66px;letter-spacing:-0.1px;">bookshelf</div><div class="a" style="left:105px;top:88px;width:9px;height:1px;background:repeating-linear-gradient(to right,#808080 0 1px,transparent 1px 2px)"></div><svg style="left:113px;top:80px" width="17" height="14" viewBox="0 0 17 14"><rect x="3" y="1" width="6" height="1" fill="#808000"/><rect x="2" y="2" width="1" height="1" fill="#808000"/><rect x="3" y="2" width="1" height="1" fill="#f4ec8c"/><rect x="4" y="2" width="1" height="1" fill="#ffffff"/><rect x="5" y="2" width="4" height="1" fill="#f4ec8c"/><rect x="9" y="2" width="1" height="1" fill="#000000"/><rect x="1" y="3" width="1" height="1" fill="#808000"/><rect x="2" y="3" width="8" height="1" fill="#f4ec8c"/><rect x="10" y="3" width="6" height="1" fill="#808000"/><rect x="1" y="4" width="1" height="1" fill="#808000"/><rect x="2" y="4" width="1" height="1" fill="#ffffff"/><rect x="3" y="4" width="2" height="1" fill="#f4ec8c"/><rect x="5" y="4" width="1" height="1" fill="#ffffff"/><rect x="6" y="4" width="8" height="1" fill="#f4ec8c"/><rect x="14" y="4" width="1" height="1" fill="#808000"/><rect x="15" y="4" width="1" height="1" fill="#000000"/><rect x="1" y="5" width="1" height="1" fill="#808000"/><rect x="2" y="5" width="5" height="1" fill="#f4ec8c"/><rect x="7" y="5" width="1" height="1" fill="#ffffff"/><rect x="8" y="5" width="3" height="1" fill="#f4ec8c"/><rect x="11" y="5" width="1" height="1" fill="#ffffff"/><rect x="12" y="5" width="2" height="1" fill="#f4ec8c"/><rect x="14" y="5" width="1" height="1" fill="#808000"/><rect x="15" y="5" width="1" height="1" fill="#000000"/><rect x="1" y="6" width="1" height="1" fill="#808000"/><rect x="2" y="6" width="1" height="1" fill="#ffffff"/><rect x="3" y="6" width="2" height="1" fill="#f4ec8c"/><rect x="5" y="6" width="1" height="1" fill="#ffffff"/><rect x="6" y="6" width="8" height="1" fill="#f4ec8c"/><rect x="14" y="6" width="1" height="1" fill="#808000"/><rect x="15" y="6" width="1" height="1" fill="#000000"/><rect x="1" y="7" width="1" height="1" fill="#808000"/><rect x="2" y="7" width="6" height="1" fill="#f4ec8c"/><rect x="8" y="7" width="1" height="1" fill="#ffffff"/><rect x="9" y="7" width="4" height="1" fill="#f4ec8c"/><rect x="13" y="7" width="1" height="1" fill="#ffffff"/><rect x="14" y="7" width="1" height="1" fill="#808000"/><rect x="15" y="7" width="1" height="1" fill="#000000"/><rect x="1" y="8" width="1" height="1" fill="#808000"/><rect x="2" y="8" width="1" height="1" fill="#ffffff"/><rect x="3" y="8" width="1" height="1" fill="#f4ec8c"/><rect x="4" y="8" width="1" height="1" fill="#ffffff"/><rect x="5" y="8" width="6" height="1" fill="#f4ec8c"/><rect x="11" y="8" width="1" height="1" fill="#ffffff"/><rect x="12" y="8" width="2" height="1" fill="#f4ec8c"/><rect x="14" y="8" width="1" height="1" fill="#808000"/><rect x="15" y="8" width="1" height="1" fill="#000000"/><rect x="1" y="9" width="1" height="1" fill="#808000"/><rect x="2" y="9" width="4" height="1" fill="#f4ec8c"/><rect x="6" y="9" width="1" height="1" fill="#ffffff"/><rect x="7" y="9" width="2" height="1" fill="#f4ec8c"/><rect x="9" y="9" width="1" height="1" fill="#ffffff"/><rect x="10" y="9" width="4" height="1" fill="#f4ec8c"/><rect x="14" y="9" width="1" height="1" fill="#808000"/><rect x="15" y="9" width="1" height="1" fill="#000000"/><rect x="1" y="10" width="1" height="1" fill="#808000"/><rect x="2" y="10" width="1" height="1" fill="#ffffff"/><rect x="3" y="10" width="10" height="1" fill="#f4ec8c"/><rect x="13" y="10" width="1" height="1" fill="#ffffff"/><rect x="14" y="10" width="1" height="1" fill="#808000"/><rect x="15" y="10" width="1" height="1" fill="#000000"/><rect x="1" y="11" width="1" height="1" fill="#808000"/><rect x="2" y="11" width="2" height="1" fill="#f4ec8c"/><rect x="4" y="11" width="1" height="1" fill="#ffffff"/><rect x="5" y="11" width="2" height="1" fill="#f4ec8c"/><rect x="7" y="11" width="1" height="1" fill="#ffffff"/><rect x="8" y="11" width="2" height="1" fill="#f4ec8c"/><rect x="10" y="11" width="1" height="1" fill="#ffffff"/><rect x="11" y="11" width="3" height="1" fill="#f4ec8c"/><rect x="14" y="11" width="1" height="1" fill="#808000"/><rect x="15" y="11" width="1" height="1" fill="#000000"/><rect x="1" y="12" width="14" height="1" fill="#808000"/><rect x="15" y="12" width="1" height="1" fill="#b8b048"/><rect x="16" y="12" width="1" height="1" fill="#000000"/><rect x="2" y="13" width="15" height="1" fill="#000000"/></svg><div class="t" style="left:135px;top:82px;letter-spacing:-0.1px;">casa</div><div class="a" style="left:105px;top:104px;width:9px;height:1px;background:repeating-linear-gradient(to right,#808080 0 1px,transparent 1px 2px)"></div><svg style="left:113px;top:96px" width="17" height="14" viewBox="0 0 17 14"><rect x="3" y="1" width="6" height="1" fill="#808000"/><rect x="2" y="2" width="1" height="1" fill="#808000"/><rect x="3" y="2" width="1" height="1" fill="#f4ec8c"/><rect x="4" y="2" width="1" height="1" fill="#ffffff"/><rect x="5" y="2" width="4" height="1" fill="#f4ec8c"/><rect x="9" y="2" width="1" height="1" fill="#000000"/><rect x="1" y="3" width="1" height="1" fill="#808000"/><rect x="2" y="3" width="8" height="1" fill="#f4ec8c"/><rect x="10" y="3" width="6" height="1" fill="#808000"/><rect x="1" y="4" width="1" height="1" fill="#808000"/><rect x="2" y="4" width="1" height="1" fill="#ffffff"/><rect x="3" y="4" width="2" height="1" fill="#f4ec8c"/><rect x="5" y="4" width="1" height="1" fill="#ffffff"/><rect x="6" y="4" width="8" height="1" fill="#f4ec8c"/><rect x="14" y="4" width="1" height="1" fill="#808000"/><rect x="15" y="4" width="1" height="1" fill="#000000"/><rect x="1" y="5" width="1" height="1" fill="#808000"/><rect x="2" y="5" width="5" height="1" fill="#f4ec8c"/><rect x="7" y="5" width="1" height="1" fill="#ffffff"/><rect x="8" y="5" width="3" height="1" fill="#f4ec8c"/><rect x="11" y="5" width="1" height="1" fill="#ffffff"/><rect x="12" y="5" width="2" height="1" fill="#f4ec8c"/><rect x="14" y="5" width="1" height="1" fill="#808000"/><rect x="15" y="5" width="1" height="1" fill="#000000"/><rect x="1" y="6" width="1" height="1" fill="#808000"/><rect x="2" y="6" width="1" height="1" fill="#ffffff"/><rect x="3" y="6" width="2" height="1" fill="#f4ec8c"/><rect x="5" y="6" width="1" height="1" fill="#ffffff"/><rect x="6" y="6" width="8" height="1" fill="#f4ec8c"/><rect x="14" y="6" width="1" height="1" fill="#808000"/><rect x="15" y="6" width="1" height="1" fill="#000000"/><rect x="1" y="7" width="1" height="1" fill="#808000"/><rect x="2" y="7" width="6" height="1" fill="#f4ec8c"/><rect x="8" y="7" width="1" height="1" fill="#ffffff"/><rect x="9" y="7" width="4" height="1" fill="#f4ec8c"/><rect x="13" y="7" width="1" height="1" fill="#ffffff"/><rect x="14" y="7" width="1" height="1" fill="#808000"/><rect x="15" y="7" width="1" height="1" fill="#000000"/><rect x="1" y="8" width="1" height="1" fill="#808000"/><rect x="2" y="8" width="1" height="1" fill="#ffffff"/><rect x="3" y="8" width="1" height="1" fill="#f4ec8c"/><rect x="4" y="8" width="1" height="1" fill="#ffffff"/><rect x="5" y="8" width="6" height="1" fill="#f4ec8c"/><rect x="11" y="8" width="1" height="1" fill="#ffffff"/><rect x="12" y="8" width="2" height="1" fill="#f4ec8c"/><rect x="14" y="8" width="1" height="1" fill="#808000"/><rect x="15" y="8" width="1" height="1" fill="#000000"/><rect x="1" y="9" width="1" height="1" fill="#808000"/><rect x="2" y="9" width="4" height="1" fill="#f4ec8c"/><rect x="6" y="9" width="1" height="1" fill="#ffffff"/><rect x="7" y="9" width="2" height="1" fill="#f4ec8c"/><rect x="9" y="9" width="1" height="1" fill="#ffffff"/><rect x="10" y="9" width="4" height="1" fill="#f4ec8c"/><rect x="14" y="9" width="1" height="1" fill="#808000"/><rect x="15" y="9" width="1" height="1" fill="#000000"/><rect x="1" y="10" width="1" height="1" fill="#808000"/><rect x="2" y="10" width="1" height="1" fill="#ffffff"/><rect x="3" y="10" width="10" height="1" fill="#f4ec8c"/><rect x="13" y="10" width="1" height="1" fill="#ffffff"/><rect x="14" y="10" width="1" height="1" fill="#808000"/><rect x="15" y="10" width="1" height="1" fill="#000000"/><rect x="1" y="11" width="1" height="1" fill="#808000"/><rect x="2" y="11" width="2" height="1" fill="#f4ec8c"/><rect x="4" y="11" width="1" height="1" fill="#ffffff"/><rect x="5" y="11" width="2" height="1" fill="#f4ec8c"/><rect x="7" y="11" width="1" height="1" fill="#ffffff"/><rect x="8" y="11" width="2" height="1" fill="#f4ec8c"/><rect x="10" y="11" width="1" height="1" fill="#ffffff"/><rect x="11" y="11" width="3" height="1" fill="#f4ec8c"/><rect x="14" y="11" width="1" height="1" fill="#808000"/><rect x="15" y="11" width="1" height="1" fill="#000000"/><rect x="1" y="12" width="14" height="1" fill="#808000"/><rect x="15" y="12" width="1" height="1" fill="#b8b048"/><rect x="16" y="12" width="1" height="1" fill="#000000"/><rect x="2" y="13" width="15" height="1" fill="#000000"/></svg><div class="t" style="left:135px;top:98px;letter-spacing:-0.1px;">fix virus</div><div class="a" style="left:105px;top:120px;width:9px;height:1px;background:repeating-linear-gradient(to right,#808080 0 1px,transparent 1px 2px)"></div><svg style="left:113px;top:112px" width="17" height="14" viewBox="0 0 17 14"><rect x="3" y="1" width="6" height="1" fill="#808000"/><rect x="2" y="2" width="1" height="1" fill="#808000"/><rect x="3" y="2" width="1" height="1" fill="#f4ec8c"/><rect x="4" y="2" width="1" height="1" fill="#ffffff"/><rect x="5" y="2" width="4" height="1" fill="#f4ec8c"/><rect x="9" y="2" width="1" height="1" fill="#000000"/><rect x="1" y="3" width="1" height="1" fill="#808000"/><rect x="2" y="3" width="8" height="1" fill="#f4ec8c"/><rect x="10" y="3" width="6" height="1" fill="#808000"/><rect x="1" y="4" width="1" height="1" fill="#808000"/><rect x="2" y="4" width="1" height="1" fill="#ffffff"/><rect x="3" y="4" width="2" height="1" fill="#f4ec8c"/><rect x="5" y="4" width="1" height="1" fill="#ffffff"/><rect x="6" y="4" width="8" height="1" fill="#f4ec8c"/><rect x="14" y="4" width="1" height="1" fill="#808000"/><rect x="15" y="4" width="1" height="1" fill="#000000"/><rect x="1" y="5" width="1" height="1" fill="#808000"/><rect x="2" y="5" width="5" height="1" fill="#f4ec8c"/><rect x="7" y="5" width="1" height="1" fill="#ffffff"/><rect x="8" y="5" width="3" height="1" fill="#f4ec8c"/><rect x="11" y="5" width="1" height="1" fill="#ffffff"/><rect x="12" y="5" width="2" height="1" fill="#f4ec8c"/><rect x="14" y="5" width="1" height="1" fill="#808000"/><rect x="15" y="5" width="1" height="1" fill="#000000"/><rect x="1" y="6" width="1" height="1" fill="#808000"/><rect x="2" y="6" width="1" height="1" fill="#ffffff"/><rect x="3" y="6" width="2" height="1" fill="#f4ec8c"/><rect x="5" y="6" width="1" height="1" fill="#ffffff"/><rect x="6" y="6" width="8" height="1" fill="#f4ec8c"/><rect x="14" y="6" width="1" height="1" fill="#808000"/><rect x="15" y="6" width="1" height="1" fill="#000000"/><rect x="1" y="7" width="1" height="1" fill="#808000"/><rect x="2" y="7" width="6" height="1" fill="#f4ec8c"/><rect x="8" y="7" width="1" height="1" fill="#ffffff"/><rect x="9" y="7" width="4" height="1" fill="#f4ec8c"/><rect x="13" y="7" width="1" height="1" fill="#ffffff"/><rect x="14" y="7" width="1" height="1" fill="#808000"/><rect x="15" y="7" width="1" height="1" fill="#000000"/><rect x="1" y="8" width="1" height="1" fill="#808000"/><rect x="2" y="8" width="1" height="1" fill="#ffffff"/><rect x="3" y="8" width="1" height="1" fill="#f4ec8c"/><rect x="4" y="8" width="1" height="1" fill="#ffffff"/><rect x="5" y="8" width="6" height="1" fill="#f4ec8c"/><rect x="11" y="8" width="1" height="1" fill="#ffffff"/><rect x="12" y="8" width="2" height="1" fill="#f4ec8c"/><rect x="14" y="8" width="1" height="1" fill="#808000"/><rect x="15" y="8" width="1" height="1" fill="#000000"/><rect x="1" y="9" width="1" height="1" fill="#808000"/><rect x="2" y="9" width="4" height="1" fill="#f4ec8c"/><rect x="6" y="9" width="1" height="1" fill="#ffffff"/><rect x="7" y="9" width="2" height="1" fill="#f4ec8c"/><rect x="9" y="9" width="1" height="1" fill="#ffffff"/><rect x="10" y="9" width="4" height="1" fill="#f4ec8c"/><rect x="14" y="9" width="1" height="1" fill="#808000"/><rect x="15" y="9" width="1" height="1" fill="#000000"/><rect x="1" y="10" width="1" height="1" fill="#808000"/><rect x="2" y="10" width="1" height="1" fill="#ffffff"/><rect x="3" y="10" width="10" height="1" fill="#f4ec8c"/><rect x="13" y="10" width="1" height="1" fill="#ffffff"/><rect x="14" y="10" width="1" height="1" fill="#808000"/><rect x="15" y="10" width="1" height="1" fill="#000000"/><rect x="1" y="11" width="1" height="1" fill="#808000"/><rect x="2" y="11" width="2" height="1" fill="#f4ec8c"/><rect x="4" y="11" width="1" height="1" fill="#ffffff"/><rect x="5" y="11" width="2" height="1" fill="#f4ec8c"/><rect x="7" y="11" width="1" height="1" fill="#ffffff"/><rect x="8" y="11" width="2" height="1" fill="#f4ec8c"/><rect x="10" y="11" width="1" height="1" fill="#ffffff"/><rect x="11" y="11" width="3" height="1" fill="#f4ec8c"/><rect x="14" y="11" width="1" height="1" fill="#808000"/><rect x="15" y="11" width="1" height="1" fill="#000000"/><rect x="1" y="12" width="14" height="1" fill="#808000"/><rect x="15" y="12" width="1" height="1" fill="#b8b048"/><rect x="16" y="12" width="1" height="1" fill="#000000"/><rect x="2" y="13" width="15" height="1" fill="#000000"/></svg><div class="t" style="left:135px;top:114px;letter-spacing:-0.1px;">nod_immagini</div><div class="a" style="left:86px;top:136px;width:9px;height:1px;background:repeating-linear-gradient(to right,#808080 0 1px,transparent 1px 2px)"></div><div class="a" style="left:80px;top:132px;width:9px;height:9px;border:1px solid #808080;background:#fff"></div><div class="a" style="left:82px;top:136px;width:5px;height:1px;background:#000"></div><div class="a" style="left:84px;top:134px;width:1px;height:5px;background:#000"></div><svg style="left:94px;top:128px" width="17" height="14" viewBox="0 0 17 14"><rect x="3" y="1" width="6" height="1" fill="#808000"/><rect x="2" y="2" width="1" height="1" fill="#808000"/><rect x="3" y="2" width="1" height="1" fill="#f4ec8c"/><rect x="4" y="2" width="1" height="1" fill="#ffffff"/><rect x="5" y="2" width="4" height="1" fill="#f4ec8c"/><rect x="9" y="2" width="1" height="1" fill="#000000"/><rect x="1" y="3" width="1" height="1" fill="#808000"/><rect x="2" y="3" width="8" height="1" fill="#f4ec8c"/><rect x="10" y="3" width="6" height="1" fill="#808000"/><rect x="1" y="4" width="1" height="1" fill="#808000"/><rect x="2" y="4" width="1" height="1" fill="#ffffff"/><rect x="3" y="4" width="2" height="1" fill="#f4ec8c"/><rect x="5" y="4" width="1" height="1" fill="#ffffff"/><rect x="6" y="4" width="8" height="1" fill="#f4ec8c"/><rect x="14" y="4" width="1" height="1" fill="#808000"/><rect x="15" y="4" width="1" height="1" fill="#000000"/><rect x="1" y="5" width="1" height="1" fill="#808000"/><rect x="2" y="5" width="5" height="1" fill="#f4ec8c"/><rect x="7" y="5" width="1" height="1" fill="#ffffff"/><rect x="8" y="5" width="3" height="1" fill="#f4ec8c"/><rect x="11" y="5" width="1" height="1" fill="#ffffff"/><rect x="12" y="5" width="2" height="1" fill="#f4ec8c"/><rect x="14" y="5" width="1" height="1" fill="#808000"/><rect x="15" y="5" width="1" height="1" fill="#000000"/><rect x="1" y="6" width="1" height="1" fill="#808000"/><rect x="2" y="6" width="1" height="1" fill="#ffffff"/><rect x="3" y="6" width="2" height="1" fill="#f4ec8c"/><rect x="5" y="6" width="1" height="1" fill="#ffffff"/><rect x="6" y="6" width="8" height="1" fill="#f4ec8c"/><rect x="14" y="6" width="1" height="1" fill="#808000"/><rect x="15" y="6" width="1" height="1" fill="#000000"/><rect x="1" y="7" width="1" height="1" fill="#808000"/><rect x="2" y="7" width="6" height="1" fill="#f4ec8c"/><rect x="8" y="7" width="1" height="1" fill="#ffffff"/><rect x="9" y="7" width="4" height="1" fill="#f4ec8c"/><rect x="13" y="7" width="1" height="1" fill="#ffffff"/><rect x="14" y="7" width="1" height="1" fill="#808000"/><rect x="15" y="7" width="1" height="1" fill="#000000"/><rect x="1" y="8" width="1" height="1" fill="#808000"/><rect x="2" y="8" width="1" height="1" fill="#ffffff"/><rect x="3" y="8" width="1" height="1" fill="#f4ec8c"/><rect x="4" y="8" width="1" height="1" fill="#ffffff"/><rect x="5" y="8" width="6" height="1" fill="#f4ec8c"/><rect x="11" y="8" width="1" height="1" fill="#ffffff"/><rect x="12" y="8" width="2" height="1" fill="#f4ec8c"/><rect x="14" y="8" width="1" height="1" fill="#808000"/><rect x="15" y="8" width="1" height="1" fill="#000000"/><rect x="1" y="9" width="1" height="1" fill="#808000"/><rect x="2" y="9" width="4" height="1" fill="#f4ec8c"/><rect x="6" y="9" width="1" height="1" fill="#ffffff"/><rect x="7" y="9" width="2" height="1" fill="#f4ec8c"/><rect x="9" y="9" width="1" height="1" fill="#ffffff"/><rect x="10" y="9" width="4" height="1" fill="#f4ec8c"/><rect x="14" y="9" width="1" height="1" fill="#808000"/><rect x="15" y="9" width="1" height="1" fill="#000000"/><rect x="1" y="10" width="1" height="1" fill="#808000"/><rect x="2" y="10" width="1" height="1" fill="#ffffff"/><rect x="3" y="10" width="10" height="1" fill="#f4ec8c"/><rect x="13" y="10" width="1" height="1" fill="#ffffff"/><rect x="14" y="10" width="1" height="1" fill="#808000"/><rect x="15" y="10" width="1" height="1" fill="#000000"/><rect x="1" y="11" width="1" height="1" fill="#808000"/><rect x="2" y="11" width="2" height="1" fill="#f4ec8c"/><rect x="4" y="11" width="1" height="1" fill="#ffffff"/><rect x="5" y="11" width="2" height="1" fill="#f4ec8c"/><rect x="7" y="11" width="1" height="1" fill="#ffffff"/><rect x="8" y="11" width="2" height="1" fill="#f4ec8c"/><rect x="10" y="11" width="1" height="1" fill="#ffffff"/><rect x="11" y="11" width="3" height="1" fill="#f4ec8c"/><rect x="14" y="11" width="1" height="1" fill="#808000"/><rect x="15" y="11" width="1" height="1" fill="#000000"/><rect x="1" y="12" width="14" height="1" fill="#808000"/><rect x="15" y="12" width="1" height="1" fill="#b8b048"/><rect x="16" y="12" width="1" height="1" fill="#000000"/><rect x="2" y="13" width="15" height="1" fill="#000000"/></svg><div class="t" style="left:116px;top:130px;letter-spacing:-0.1px;">Documenti</div>
</div>
<div class="a" style="left:289px;top:73px;width:16px;height:16px;background:#d4d0c8;border:1px solid;border-color:#d4d0c8 #404040 #404040 #d4d0c8;box-shadow:inset 1px 1px #ffffff,inset -1px -1px #808080;"></div><svg style="left:293px;top:79px" width="7" height="4" viewBox="0 0 7 4"><rect x="3" y="0" width="1" height="1" fill="#000000"/><rect x="2" y="1" width="3" height="1" fill="#000000"/><rect x="1" y="2" width="5" height="1" fill="#000000"/><rect x="0" y="3" width="7" height="1" fill="#000000"/></svg>
<div class="a dith" style="left:289px;top:89px;width:16px;height:106px;"></div>
<div class="a" style="left:289px;top:115px;width:16px;height:24px;background:#d4d0c8;border:1px solid;border-color:#d4d0c8 #404040 #404040 #d4d0c8;box-shadow:inset 1px 1px #ffffff,inset -1px -1px #808080;"></div>
<div class="a" style="left:289px;top:195px;width:16px;height:16px;background:#d4d0c8;border:1px solid;border-color:#d4d0c8 #404040 #404040 #d4d0c8;box-shadow:inset 1px 1px #ffffff,inset -1px -1px #808080;"></div><svg style="left:293px;top:201px" width="7" height="4" viewBox="0 0 7 4"><rect x="0" y="0" width="7" height="1" fill="#000000"/><rect x="1" y="1" width="5" height="1" fill="#000000"/><rect x="2" y="2" width="3" height="1" fill="#000000"/><rect x="3" y="3" width="1" height="1" fill="#000000"/></svg>
<div class="a" style="left:10px;top:219px;width:279px;height:249px;overflow:hidden">
<div class="a" style="left:0px;top:0px;width:119px;height:17px;background:#d4d0c8;border-top:1px solid #ffffff;border-left:1px solid #ffffff;border-right:1px solid #404040;border-bottom:1px solid #404040;box-shadow:inset -1px -1px #808080;"></div>
<div class="t" style="left:6px;top:3px;">Filename</div>
<div class="a" style="left:119px;top:0px;width:61px;height:17px;background:#d4d0c8;border-top:1px solid #ffffff;border-left:1px solid #ffffff;border-right:1px solid #404040;border-bottom:1px solid #404040;box-shadow:inset -1px -1px #808080;"></div>
<div class="t" style="left:119px;top:3px;width:57px;text-align:right;">Size</div>
<div class="a" style="left:180px;top:0px;width:120px;height:17px;background:#d4d0c8;border-top:1px solid #ffffff;border-left:1px solid #ffffff;border-right:1px solid #404040;border-bottom:1px solid #404040;box-shadow:inset -1px -1px #808080;"></div>
<div class="t" style="left:186px;top:3px;">Modified</div>
<div class="t" style="left:4px;top:20px;color:#000;letter-spacing:-0.1px;">Bookshelf_ico.gif</div>
<div class="t" style="left:119px;top:20px;color:#000;width:56px;text-align:right;">1 KB</div>
<div class="t" style="left:186px;top:20px;color:#000;letter-spacing:0.25px;">03/04/2002 15.51</div>
<div class="t" style="left:4px;top:34px;color:#000;letter-spacing:-0.1px;">clear_big.gif</div>
<div class="t" style="left:119px;top:34px;color:#000;width:56px;text-align:right;">11 KB</div>
<div class="t" style="left:186px;top:34px;color:#000;letter-spacing:0.25px;">03/04/2002 9.13</div>
<div class="t" style="left:4px;top:48px;color:#000;letter-spacing:-0.1px;">clear_sma.gif</div>
<div class="t" style="left:119px;top:48px;color:#000;width:56px;text-align:right;">3 KB</div>
<div class="t" style="left:186px;top:48px;color:#000;letter-spacing:0.25px;">03/04/2002 9.15</div>
<div class="t" style="left:4px;top:62px;color:#000;letter-spacing:-0.1px;">esempio.gif</div>
<div class="t" style="left:119px;top:62px;color:#000;width:56px;text-align:right;">132 KB</div>
<div class="t" style="left:186px;top:62px;color:#000;letter-spacing:0.25px;">02/04/2002 17.12</div>
<div class="t" style="left:4px;top:76px;color:#000;letter-spacing:-0.1px;">esempio_sma.gif</div>
<div class="t" style="left:119px;top:76px;color:#000;width:56px;text-align:right;">15 KB</div>
<div class="t" style="left:186px;top:76px;color:#000;letter-spacing:0.25px;">02/04/2002 17.12</div>
<div class="t" style="left:4px;top:90px;color:#000;letter-spacing:-0.1px;">find.gif</div>
<div class="t" style="left:119px;top:90px;color:#000;width:56px;text-align:right;">5 KB</div>
<div class="t" style="left:186px;top:90px;color:#000;letter-spacing:0.25px;">02/04/2002 17.02</div>
<div class="a" style="left:2px;top:103px;width:277px;height:14px;background:#0a246a;"></div>
<div class="a" style="left:2px;top:103px;width:277px;height:14px;border:1px dotted #f0e060;border-right:none;"></div>
<div class="t" style="left:4px;top:104px;color:#fff;letter-spacing:-0.1px;">help.gif</div>
<div class="t" style="left:119px;top:104px;color:#fff;width:56px;text-align:right;">22 KB</div>
<div class="t" style="left:186px;top:104px;color:#fff;letter-spacing:0.25px;">02/04/2002 17.01</div>
<div class="t" style="left:4px;top:118px;color:#000;letter-spacing:-0.1px;">help_sma.gif</div>
<div class="t" style="left:119px;top:118px;color:#000;width:56px;text-align:right;">5 KB</div>
<div class="t" style="left:186px;top:118px;color:#000;letter-spacing:0.25px;">02/04/2002 17.15</div>
<div class="t" style="left:4px;top:132px;color:#000;letter-spacing:-0.1px;">open.gif</div>
<div class="t" style="left:119px;top:132px;color:#000;width:56px;text-align:right;">25 KB</div>
<div class="t" style="left:186px;top:132px;color:#000;letter-spacing:0.25px;">02/04/2002 17.08</div>
<div class="t" style="left:4px;top:146px;color:#000;letter-spacing:-0.1px;">open_sma.gif</div>
<div class="t" style="left:119px;top:146px;color:#000;width:56px;text-align:right;">4 KB</div>
<div class="t" style="left:186px;top:146px;color:#000;letter-spacing:0.25px;">02/04/2002 17.08</div>
<div class="t" style="left:4px;top:160px;color:#000;letter-spacing:-0.1px;">option1.gif</div>
<div class="t" style="left:119px;top:160px;color:#000;width:56px;text-align:right;">77 KB</div>
<div class="t" style="left:186px;top:160px;color:#000;letter-spacing:0.25px;">02/04/2002 17.03</div>
<div class="t" style="left:4px;top:174px;color:#000;letter-spacing:-0.1px;">option1_sma.gif</div>
<div class="t" style="left:119px;top:174px;color:#000;width:56px;text-align:right;">14 KB</div>
<div class="t" style="left:186px;top:174px;color:#000;letter-spacing:0.25px;">02/04/2002 17.04</div>
<div class="t" style="left:4px;top:188px;color:#000;letter-spacing:-0.1px;">option2.gif</div>
<div class="t" style="left:119px;top:188px;color:#000;width:56px;text-align:right;">67 KB</div>
<div class="t" style="left:186px;top:188px;color:#000;letter-spacing:0.25px;">02/04/2002 17.05</div>
<div class="t" style="left:4px;top:202px;color:#000;letter-spacing:-0.1px;">option2_sma.gif</div>
<div class="t" style="left:119px;top:202px;color:#000;width:56px;text-align:right;">14 KB</div>
<div class="t" style="left:186px;top:202px;color:#000;letter-spacing:0.25px;">02/04/2002 17.05</div>
<div class="t" style="left:4px;top:216px;color:#000;letter-spacing:-0.1px;">page.gif</div>
<div class="t" style="left:119px;top:216px;color:#000;width:56px;text-align:right;">3 KB</div>
<div class="t" style="left:186px;top:216px;color:#000;letter-spacing:0.25px;">02/04/2002 17.17</div>
<div class="t" style="left:4px;top:230px;color:#000;letter-spacing:-0.1px;">page_sma.gif</div>
<div class="t" style="left:119px;top:230px;color:#000;width:56px;text-align:right;">10 KB</div>
<div class="t" style="left:186px;top:230px;color:#000;letter-spacing:0.25px;">02/04/2002 17.07</div>
</div>
<div class="a" style="left:289px;top:219px;width:16px;height:16px;background:#d4d0c8;border:1px solid;border-color:#d4d0c8 #404040 #404040 #d4d0c8;box-shadow:inset 1px 1px #ffffff,inset -1px -1px #808080;"></div><svg style="left:293px;top:225px" width="7" height="4" viewBox="0 0 7 4"><rect x="3" y="0" width="1" height="1" fill="#000000"/><rect x="2" y="1" width="3" height="1" fill="#000000"/><rect x="1" y="2" width="5" height="1" fill="#000000"/><rect x="0" y="3" width="7" height="1" fill="#000000"/></svg>
<div class="a" style="left:289px;top:235px;width:16px;height:177px;background:#d4d0c8;border:1px solid;border-color:#d4d0c8 #404040 #404040 #d4d0c8;box-shadow:inset 1px 1px #ffffff,inset -1px -1px #808080;"></div>
<div class="a dith" style="left:289px;top:412px;width:16px;height:24px;"></div>
<div class="a" style="left:289px;top:436px;width:16px;height:16px;background:#d4d0c8;border:1px solid;border-color:#d4d0c8 #404040 #404040 #d4d0c8;box-shadow:inset 1px 1px #ffffff,inset -1px -1px #808080;"></div><svg style="left:293px;top:442px" width="7" height="4" viewBox="0 0 7 4"><rect x="0" y="0" width="7" height="1" fill="#000000"/><rect x="1" y="1" width="5" height="1" fill="#000000"/><rect x="2" y="2" width="3" height="1" fill="#000000"/><rect x="3" y="3" width="1" height="1" fill="#000000"/></svg>
<div class="a" style="left:289px;top:452px;width:16px;height:16px;background:#d4d0c8;"></div>
<div class="a" style="left:10px;top:452px;width:16px;height:16px;background:#d4d0c8;border:1px solid;border-color:#d4d0c8 #404040 #404040 #d4d0c8;box-shadow:inset 1px 1px #ffffff,inset -1px -1px #808080;"></div><svg style="left:16px;top:456px" width="4" height="7" viewBox="0 0 4 7"><rect x="3" y="0" width="1" height="1" fill="#000000"/><rect x="2" y="1" width="2" height="1" fill="#000000"/><rect x="1" y="2" width="3" height="1" fill="#000000"/><rect x="0" y="3" width="4" height="1" fill="#000000"/><rect x="1" y="4" width="3" height="1" fill="#000000"/><rect x="2" y="5" width="2" height="1" fill="#000000"/><rect x="3" y="6" width="1" height="1" fill="#000000"/></svg>
<div class="a" style="left:26px;top:452px;width:238px;height:16px;background:#d4d0c8;border:1px solid;border-color:#d4d0c8 #404040 #404040 #d4d0c8;box-shadow:inset 1px 1px #ffffff,inset -1px -1px #808080;"></div>
<div class="a dith" style="left:264px;top:452px;width:9px;height:16px;"></div>
<div class="a" style="left:273px;top:452px;width:16px;height:16px;background:#d4d0c8;border:1px solid;border-color:#d4d0c8 #404040 #404040 #d4d0c8;box-shadow:inset 1px 1px #ffffff,inset -1px -1px #808080;"></div><svg style="left:279px;top:456px" width="4" height="7" viewBox="0 0 4 7"><rect x="0" y="0" width="1" height="1" fill="#000000"/><rect x="0" y="1" width="2" height="1" fill="#000000"/><rect x="0" y="2" width="3" height="1" fill="#000000"/><rect x="0" y="3" width="4" height="1" fill="#000000"/><rect x="0" y="4" width="3" height="1" fill="#000000"/><rect x="0" y="5" width="2" height="1" fill="#000000"/><rect x="0" y="6" width="1" height="1" fill="#000000"/></svg>
<div class="a" style="left:4px;top:470px;width:54px;height:23px;background:#d4d0c8;border-left:1px solid #ffffff;border-right:1px solid #404040;border-bottom:1px solid #404040;box-shadow:inset -1px -1px #808080;"></div>
<div class="a" style="left:58px;top:470px;width:75px;height:21px;background:#d4d0c8;border-right:1px solid #404040;border-bottom:1px solid #404040;border-top:1px solid #808080;box-shadow:inset -1px -1px #808080;"></div>
<div class="a" style="left:57px;top:471px;width:1px;height:20px;background:#404040;"></div>
<div class="a" style="left:57px;top:471px;width:76px;height:1px;background:#404040;"></div>
<div class="a" style="left:4px;top:491px;width:1px;height:1px;background:#d4d0c8;"></div>
<div class="a" style="left:4px;top:492px;width:1px;height:1px;background:#d4d0c8;"></div>
<div class="a" style="left:5px;top:492px;width:1px;height:1px;background:#d4d0c8;"></div>
<div class="a" style="left:5px;top:491px;width:1px;height:1px;background:#ffffff;"></div>
<div class="a" style="left:57px;top:491px;width:1px;height:1px;background:#d4d0c8;"></div>
<div class="a" style="left:57px;top:492px;width:1px;height:1px;background:#d4d0c8;"></div>
<div class="a" style="left:56px;top:492px;width:1px;height:1px;background:#d4d0c8;"></div>
<div class="a" style="left:56px;top:491px;width:1px;height:1px;background:#404040;"></div>
<div class="a" style="left:132px;top:489px;width:1px;height:1px;background:#d4d0c8;"></div>
<div class="a" style="left:132px;top:490px;width:1px;height:1px;background:#d4d0c8;"></div>
<div class="a" style="left:131px;top:490px;width:1px;height:1px;background:#d4d0c8;"></div>
<div class="a" style="left:131px;top:489px;width:1px;height:1px;background:#404040;"></div>
<svg style="left:13px;top:476px" width="13" height="13" viewBox="0 0 13 13"><rect x="3" y="0" width="4" height="1" fill="#0000c8"/><rect x="8" y="0" width="5" height="1" fill="#0000c8"/><rect x="0" y="2" width="13" height="1" fill="#0000c8"/><rect x="0" y="4" width="2" height="1" fill="#0000c8"/><rect x="3" y="4" width="4" height="1" fill="#000000"/><rect x="8" y="4" width="5" height="1" fill="#000000"/><rect x="0" y="6" width="2" height="1" fill="#0000c8"/><rect x="3" y="6" width="4" height="1" fill="#000000"/><rect x="8" y="6" width="5" height="1" fill="#000000"/><rect x="0" y="8" width="2" height="1" fill="#0000c8"/><rect x="3" y="8" width="4" height="1" fill="#000000"/><rect x="8" y="8" width="5" height="1" fill="#000000"/><rect x="0" y="10" width="2" height="1" fill="#0000c8"/><rect x="3" y="10" width="4" height="1" fill="#000000"/><rect x="8" y="10" width="5" height="1" fill="#000000"/><rect x="0" y="12" width="2" height="1" fill="#0000c8"/><rect x="3" y="12" width="4" height="1" fill="#000000"/><rect x="8" y="12" width="5" height="1" fill="#000000"/></svg>
<div class="t" style="left:34px;top:476px;">File</div>
<svg style="left:60px;top:474px" width="17" height="14" viewBox="0 0 17 14"><rect x="4" y="0" width="4" height="1" fill="#0000c8"/><rect x="12" y="0" width="4" height="1" fill="#0000c8"/><rect x="4" y="1" width="1" height="1" fill="#0000c8"/><rect x="5" y="1" width="2" height="1" fill="#ffffff"/><rect x="7" y="1" width="1" height="1" fill="#0000c8"/><rect x="12" y="1" width="1" height="1" fill="#0000c8"/><rect x="13" y="1" width="2" height="1" fill="#ffffff"/><rect x="15" y="1" width="1" height="1" fill="#0000c8"/><rect x="4" y="2" width="1" height="1" fill="#0000c8"/><rect x="5" y="2" width="2" height="1" fill="#ffffff"/><rect x="7" y="2" width="1" height="1" fill="#0000c8"/><rect x="12" y="2" width="1" height="1" fill="#0000c8"/><rect x="13" y="2" width="2" height="1" fill="#ffffff"/><rect x="15" y="2" width="1" height="1" fill="#0000c8"/><rect x="4" y="3" width="4" height="1" fill="#0000c8"/><rect x="12" y="3" width="4" height="1" fill="#0000c8"/><rect x="3" y="5" width="6" height="1" fill="#000000"/><rect x="11" y="5" width="6" height="1" fill="#000000"/><rect x="4" y="8" width="4" height="1" fill="#0000c8"/><rect x="12" y="8" width="4" height="1" fill="#0000c8"/><rect x="4" y="9" width="1" height="1" fill="#0000c8"/><rect x="5" y="9" width="2" height="1" fill="#ffffff"/><rect x="7" y="9" width="1" height="1" fill="#0000c8"/><rect x="12" y="9" width="1" height="1" fill="#0000c8"/><rect x="13" y="9" width="2" height="1" fill="#ffffff"/><rect x="15" y="9" width="1" height="1" fill="#0000c8"/><rect x="4" y="10" width="1" height="1" fill="#0000c8"/><rect x="5" y="10" width="2" height="1" fill="#ffffff"/><rect x="7" y="10" width="1" height="1" fill="#0000c8"/><rect x="12" y="10" width="1" height="1" fill="#0000c8"/><rect x="13" y="10" width="2" height="1" fill="#ffffff"/><rect x="15" y="10" width="1" height="1" fill="#0000c8"/><rect x="4" y="11" width="4" height="1" fill="#0000c8"/><rect x="12" y="11" width="4" height="1" fill="#0000c8"/><rect x="3" y="13" width="6" height="1" fill="#000000"/><rect x="11" y="13" width="6" height="1" fill="#000000"/></svg>
<div class="t" style="left:84px;top:475px;letter-spacing:-0.15px;">Miniature</div>
<div class="t" style="left:6px;top:498px;letter-spacing:-0.03px;">C:\Documents and Settings\Administrator\Desktop\bookshelf\help.gif</div>
<div class="t" style="left:351px;top:498px;letter-spacing:0.6px;">7/17</div>
<div class="t" style="left:391px;top:498px;">Zoom: 93,8%</div>
<div class="t" style="left:466px;top:498px;letter-spacing:-0.15px;">480 x 360 pix. 11 KB</div>
<svg style="left:752px;top:500px" width="13" height="13" viewBox="0 0 13 13"><rect x="12" y="0" width="1" height="1" fill="#ffffff"/><rect x="11" y="1" width="1" height="1" fill="#ffffff"/><rect x="12" y="1" width="1" height="1" fill="#808080"/><rect x="10" y="2" width="1" height="1" fill="#ffffff"/><rect x="11" y="2" width="2" height="1" fill="#808080"/><rect x="9" y="3" width="1" height="1" fill="#ffffff"/><rect x="10" y="3" width="2" height="1" fill="#808080"/><rect x="12" y="3" width="1" height="1" fill="#d4d0c8"/><rect x="8" y="4" width="1" height="1" fill="#ffffff"/><rect x="9" y="4" width="2" height="1" fill="#808080"/><rect x="11" y="4" width="1" height="1" fill="#d4d0c8"/><rect x="12" y="4" width="1" height="1" fill="#ffffff"/><rect x="7" y="5" width="1" height="1" fill="#ffffff"/><rect x="8" y="5" width="2" height="1" fill="#808080"/><rect x="10" y="5" width="1" height="1" fill="#d4d0c8"/><rect x="11" y="5" width="1" height="1" fill="#ffffff"/><rect x="12" y="5" width="1" height="1" fill="#808080"/><rect x="6" y="6" width="1" height="1" fill="#ffffff"/><rect x="7" y="6" width="2" height="1" fill="#808080"/><rect x="9" y="6" width="1" height="1" fill="#d4d0c8"/><rect x="10" y="6" width="1" height="1" fill="#ffffff"/><rect x="11" y="6" width="2" height="1" fill="#808080"/><rect x="5" y="7" width="1" height="1" fill="#ffffff"/><rect x="6" y="7" width="2" height="1" fill="#808080"/><rect x="8" y="7" width="1" height="1" fill="#d4d0c8"/><rect x="9" y="7" width="1" height="1" fill="#ffffff"/><rect x="10" y="7" width="2" height="1" fill="#808080"/><rect x="12" y="7" width="1" height="1" fill="#d4d0c8"/><rect x="4" y="8" width="1" height="1" fill="#ffffff"/><rect x="5" y="8" width="2" height="1" fill="#808080"/><rect x="7" y="8" width="1" height="1" fill="#d4d0c8"/><rect x="8" y="8" width="1" height="1" fill="#ffffff"/><rect x="9" y="8" width="2" height="1" fill="#808080"/><rect x="11" y="8" width="1" height="1" fill="#d4d0c8"/><rect x="12" y="8" width="1" height="1" fill="#ffffff"/><rect x="3" y="9" width="1" height="1" fill="#ffffff"/><rect x="4" y="9" width="2" height="1" fill="#808080"/><rect x="6" y="9" width="1" height="1" fill="#d4d0c8"/><rect x="7" y="9" width="1" height="1" fill="#ffffff"/><rect x="8" y="9" width="2" height="1" fill="#808080"/><rect x="10" y="9" width="1" height="1" fill="#d4d0c8"/><rect x="11" y="9" width="1" height="1" fill="#ffffff"/><rect x="12" y="9" width="1" height="1" fill="#808080"/><rect x="2" y="10" width="1" height="1" fill="#ffffff"/><rect x="3" y="10" width="2" height="1" fill="#808080"/><rect x="5" y="10" width="1" height="1" fill="#d4d0c8"/><rect x="6" y="10" width="1" height="1" fill="#ffffff"/><rect x="7" y="10" width="2" height="1" fill="#808080"/><rect x="9" y="10" width="1" height="1" fill="#d4d0c8"/><rect x="10" y="10" width="1" height="1" fill="#ffffff"/><rect x="11" y="10" width="2" height="1" fill="#808080"/><rect x="1" y="11" width="1" height="1" fill="#ffffff"/><rect x="2" y="11" width="2" height="1" fill="#808080"/><rect x="4" y="11" width="1" height="1" fill="#d4d0c8"/><rect x="5" y="11" width="1" height="1" fill="#ffffff"/><rect x="6" y="11" width="2" height="1" fill="#808080"/><rect x="8" y="11" width="1" height="1" fill="#d4d0c8"/><rect x="9" y="11" width="1" height="1" fill="#ffffff"/><rect x="10" y="11" width="2" height="1" fill="#808080"/><rect x="12" y="11" width="1" height="1" fill="#d4d0c8"/><rect x="0" y="12" width="1" height="1" fill="#ffffff"/><rect x="1" y="12" width="2" height="1" fill="#808080"/><rect x="3" y="12" width="1" height="1" fill="#d4d0c8"/><rect x="4" y="12" width="1" height="1" fill="#ffffff"/><rect x="5" y="12" width="2" height="1" fill="#808080"/><rect x="7" y="12" width="1" height="1" fill="#d4d0c8"/><rect x="8" y="12" width="1" height="1" fill="#ffffff"/><rect x="9" y="12" width="2" height="1" fill="#808080"/><rect x="11" y="12" width="2" height="1" fill="#d4d0c8"/></svg>
</body></html>
